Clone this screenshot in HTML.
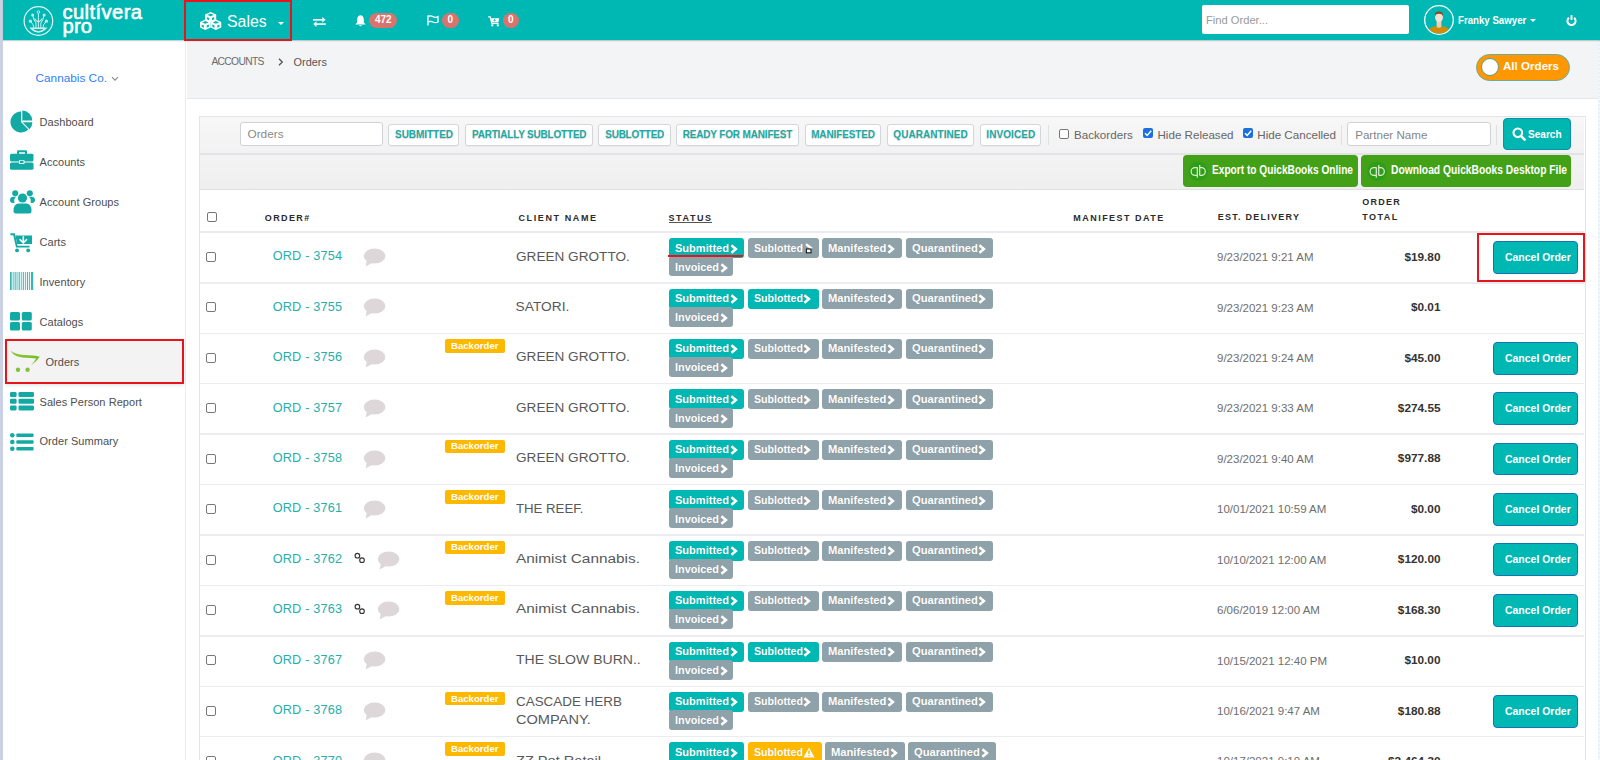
<!DOCTYPE html>
<html><head><meta charset="utf-8"><title>Orders</title>
<style>
html,body{margin:0;padding:0;width:1600px;height:760px;overflow:hidden;background:#fff;font-family:"Liberation Sans",sans-serif}
</style></head><body>
<div style="position:absolute;left:186px;top:40px;width:1412px;height:720px;background:#fff"></div>
<div style="position:absolute;left:187px;top:40px;width:1411px;height:58px;background:#f3f4f6;border-bottom:1px solid #e3e6ea"></div>
<div style="position:absolute;left:1597.8px;top:40px;width:2.2px;height:720px;background:repeating-linear-gradient(180deg,#e8f0f8 0 2px,#f3f8fc 2px 4px)"></div>
<div style="position:absolute;left:211.4px;top:57.38px;white-space:nowrap;font:normal 10.3px/10.3px 'Liberation Sans',sans-serif;color:#6b6b6b;letter-spacing:-0.68px;">ACCOUNTS</div>
<svg style="position:absolute;left:278px;top:58px" width="6" height="8" viewBox="0 0 6 8"><path d="M1 0.8 L4.3 4 L1 7.2" fill="none" stroke="#555" stroke-width="1.3"/></svg>
<div style="position:absolute;left:293.6px;top:56.87px;white-space:nowrap;font:normal 10.9px/10.9px 'Liberation Sans',sans-serif;color:#555;letter-spacing:0px;">Orders</div>
<div style="position:absolute;left:1476px;top:53.5px;width:94px;height:27.5px;box-sizing:border-box;border-radius:14px;background:#ff9800;border:1px solid #6aab9f"></div>
<div style="position:absolute;left:1481px;top:58px;width:18px;height:18px;box-sizing:border-box;border-radius:50%;background:#fff;border:1px solid #5d9c7a"></div>
<div style="position:absolute;left:1503px;top:60.18px;white-space:nowrap;font:bold 11.6px/11.6px 'Liberation Sans',sans-serif;color:#fff;letter-spacing:0px;">All Orders</div>
<div style="position:absolute;left:199px;top:115.5px;width:1387px;height:650px;box-sizing:border-box;border:1px solid #e2e4e7;border-bottom:none;background:#fff"></div>
<div style="position:absolute;left:200px;top:116.5px;width:1384px;height:36px;background:linear-gradient(#f7f7f7,#f2f2f2);border-bottom:2px solid #e1e3e6"></div>
<div style="position:absolute;left:200px;top:154.5px;width:1384px;height:34.5px;background:linear-gradient(#f3f3f3,#efefef);border-bottom:1px solid #dfe1e4"></div>
<div style="position:absolute;left:239.5px;top:122.3px;width:143.5px;height:24px;box-sizing:border-box;background:#fff;border:1px solid #cfd2d6;border-radius:3px"></div>
<div style="position:absolute;left:247.5px;top:128.51px;white-space:nowrap;font:normal 11.8px/11.8px 'Liberation Sans',sans-serif;color:#8a8a8a;letter-spacing:0px;">Orders</div>
<div style="position:absolute;left:388.4px;top:123.5px;width:70.9px;height:22px;box-sizing:border-box;background:#fff;border:1px solid #d3d6da;border-radius:3px;box-shadow:0 1px 1px rgba(0,0,0,0.04)"></div>
<div style="position:absolute;left:395px;top:130.03px;white-space:nowrap;font:bold 10px/10px 'Liberation Sans',sans-serif;color:#1fa9a3;letter-spacing:-0.041px;text-shadow:0 1px 1px rgba(0,0,0,0.18)">SUBMITTED</div>
<div style="position:absolute;left:465.1px;top:123.5px;width:128.3px;height:22px;box-sizing:border-box;background:#fff;border:1px solid #d3d6da;border-radius:3px;box-shadow:0 1px 1px rgba(0,0,0,0.04)"></div>
<div style="position:absolute;left:471.9px;top:130.03px;white-space:nowrap;font:bold 10px/10px 'Liberation Sans',sans-serif;color:#1fa9a3;letter-spacing:-0.192px;text-shadow:0 1px 1px rgba(0,0,0,0.18)">PARTIALLY SUBLOTTED</div>
<div style="position:absolute;left:598.3px;top:123.5px;width:72.7px;height:22px;box-sizing:border-box;background:#fff;border:1px solid #d3d6da;border-radius:3px;box-shadow:0 1px 1px rgba(0,0,0,0.04)"></div>
<div style="position:absolute;left:605.3px;top:130.03px;white-space:nowrap;font:bold 10px/10px 'Liberation Sans',sans-serif;color:#1fa9a3;letter-spacing:-0.264px;text-shadow:0 1px 1px rgba(0,0,0,0.18)">SUBLOTTED</div>
<div style="position:absolute;left:675.5px;top:123.5px;width:123.1px;height:22px;box-sizing:border-box;background:#fff;border:1px solid #d3d6da;border-radius:3px;box-shadow:0 1px 1px rgba(0,0,0,0.04)"></div>
<div style="position:absolute;left:682.7px;top:130.03px;white-space:nowrap;font:bold 10px/10px 'Liberation Sans',sans-serif;color:#1fa9a3;letter-spacing:-0.165px;text-shadow:0 1px 1px rgba(0,0,0,0.18)">READY FOR MANIFEST</div>
<div style="position:absolute;left:804.5px;top:123.5px;width:76.0px;height:22px;box-sizing:border-box;background:#fff;border:1px solid #d3d6da;border-radius:3px;box-shadow:0 1px 1px rgba(0,0,0,0.04)"></div>
<div style="position:absolute;left:811.2px;top:130.03px;white-space:nowrap;font:bold 10px/10px 'Liberation Sans',sans-serif;color:#1fa9a3;letter-spacing:-0.144px;text-shadow:0 1px 1px rgba(0,0,0,0.18)">MANIFESTED</div>
<div style="position:absolute;left:886.6px;top:123.5px;width:87.7px;height:22px;box-sizing:border-box;background:#fff;border:1px solid #d3d6da;border-radius:3px;box-shadow:0 1px 1px rgba(0,0,0,0.04)"></div>
<div style="position:absolute;left:893.3px;top:130.03px;white-space:nowrap;font:bold 10px/10px 'Liberation Sans',sans-serif;color:#1fa9a3;letter-spacing:0.061px;text-shadow:0 1px 1px rgba(0,0,0,0.18)">QUARANTINED</div>
<div style="position:absolute;left:979.5px;top:123.5px;width:61.9px;height:22px;box-sizing:border-box;background:#fff;border:1px solid #d3d6da;border-radius:3px;box-shadow:0 1px 1px rgba(0,0,0,0.04)"></div>
<div style="position:absolute;left:986.3px;top:130.03px;white-space:nowrap;font:bold 10px/10px 'Liberation Sans',sans-serif;color:#1fa9a3;letter-spacing:0.094px;text-shadow:0 1px 1px rgba(0,0,0,0.18)">INVOICED</div>
<div style="position:absolute;left:1047.5px;top:125px;width:1px;height:20px;background:#dde0e4"></div>
<div style="position:absolute;left:1341px;top:125px;width:1px;height:20px;background:#dde0e4"></div>
<div style="position:absolute;left:1496.4px;top:125px;width:1px;height:20px;background:#dde0e4"></div>
<div style="position:absolute;left:1058.7px;top:128.5px;width:10px;height:10px;box-sizing:border-box;border:1px solid #777;border-radius:2px;background:#fff"></div>
<div style="position:absolute;left:1074px;top:128.78px;white-space:nowrap;font:normal 11.6px/11.6px 'Liberation Sans',sans-serif;color:#666;letter-spacing:0.02px;">Backorders</div>
<div style="position:absolute;left:1143px;top:128.3px;width:10px;height:10px;border-radius:2px;background:#1b6fe0"></div>
<svg style="position:absolute;left:1143px;top:128.3px" width="10" height="10" viewBox="0 0 10 10"><path d="M2 5.2 L4.2 7.4 L8.2 2.8" fill="none" stroke="#fff" stroke-width="1.5"/></svg>
<div style="position:absolute;left:1242.7px;top:128.3px;width:10px;height:10px;border-radius:2px;background:#1b6fe0"></div>
<svg style="position:absolute;left:1242.7px;top:128.3px" width="10" height="10" viewBox="0 0 10 10"><path d="M2 5.2 L4.2 7.4 L8.2 2.8" fill="none" stroke="#fff" stroke-width="1.5"/></svg>
<div style="position:absolute;left:1157.5px;top:128.78px;white-space:nowrap;font:normal 11.6px/11.6px 'Liberation Sans',sans-serif;color:#666;letter-spacing:0px;">Hide Released</div>
<div style="position:absolute;left:1257.3px;top:128.78px;white-space:nowrap;font:normal 11.6px/11.6px 'Liberation Sans',sans-serif;color:#666;letter-spacing:0px;">Hide Cancelled</div>
<div style="position:absolute;left:1347.3px;top:122.4px;width:143.4px;height:24px;box-sizing:border-box;background:#fff;border:1px solid #cfd2d6;border-radius:3px"></div>
<div style="position:absolute;left:1355.2px;top:128.78px;white-space:nowrap;font:normal 11.6px/11.6px 'Liberation Sans',sans-serif;color:#858585;letter-spacing:0px;">Partner Name</div>
<div style="position:absolute;left:1502.8px;top:118.2px;width:68px;height:32.3px;box-sizing:border-box;background:#00b6b1;border:1px solid #0e8fb0;border-radius:4px"></div>
<svg style="position:absolute;left:1511.5px;top:127px" width="14" height="14" viewBox="0 0 14 14"><circle cx="5.8" cy="5.8" r="4.3" fill="none" stroke="#fff" stroke-width="2.1"/><path d="M8.9 8.9 L12.6 12.6" stroke="#fff" stroke-width="2.6" stroke-linecap="round"/></svg>
<div style="position:absolute;left:1528.1px;top:129.02px;white-space:nowrap;font:bold 11.2px/11.2px 'Liberation Sans',sans-serif;color:#fff;letter-spacing:0px;"><span style="display:inline-block;transform:scaleX(0.9);transform-origin:0 0">Search</span></div>
<div style="position:absolute;left:1182.6px;top:155.4px;width:175.0px;height:31.4px;border-radius:4px;background:#43a117"></div>
<svg style="position:absolute;left:1188.1999999999998px;top:161px" width="21" height="21" viewBox="0 0 21 21"><circle cx="10.2" cy="10.2" r="9.8" fill="#2f9d1a"/><path d="M9.3 6.6 H7 A3.9 3.9 0 0 0 7 14.4 H9.3 M9.3 6.3 V16.7" fill="none" stroke="#d9efcf" stroke-width="1.2"/><path d="M11.7 4 V14.5 M11.7 14.4 H13.4 A3.9 3.9 0 0 0 13.4 6.6 H11.7" fill="none" stroke="#d9efcf" stroke-width="1.2"/></svg>
<div style="position:absolute;left:1211.6999999999998px;top:163.53px;white-space:nowrap;font:bold 12.6px/12.6px 'Liberation Sans',sans-serif;color:#fff;letter-spacing:0px;"><span style="display:inline-block;transform:scaleX(0.8060);transform-origin:0 0">Export to QuickBooks Online</span></div>
<div style="position:absolute;left:1361.4px;top:155.4px;width:209.6px;height:31.4px;border-radius:4px;background:#43a117"></div>
<svg style="position:absolute;left:1367.0px;top:161px" width="21" height="21" viewBox="0 0 21 21"><circle cx="10.2" cy="10.2" r="9.8" fill="#2f9d1a"/><path d="M9.3 6.6 H7 A3.9 3.9 0 0 0 7 14.4 H9.3 M9.3 6.3 V16.7" fill="none" stroke="#d9efcf" stroke-width="1.2"/><path d="M11.7 4 V14.5 M11.7 14.4 H13.4 A3.9 3.9 0 0 0 13.4 6.6 H11.7" fill="none" stroke="#d9efcf" stroke-width="1.2"/></svg>
<div style="position:absolute;left:1390.5px;top:163.53px;white-space:nowrap;font:bold 12.6px/12.6px 'Liberation Sans',sans-serif;color:#fff;letter-spacing:0px;"><span style="display:inline-block;transform:scaleX(0.8166);transform-origin:0 0">Download QuickBooks Desktop File</span></div>
<div style="position:absolute;left:207px;top:211.6px;width:10px;height:10px;box-sizing:border-box;border:1px solid #777;border-radius:2px;background:#fff"></div>
<div style="position:absolute;left:264.75px;top:213.58px;white-space:nowrap;font:bold 9px/9px 'Liberation Sans',sans-serif;color:#2b2b2b;letter-spacing:1.399px;">ORDER#</div>
<div style="position:absolute;left:518.5px;top:213.58px;white-space:nowrap;font:bold 9px/9px 'Liberation Sans',sans-serif;color:#2b2b2b;letter-spacing:1.6px;">CLIENT NAME</div>
<div style="position:absolute;left:668.5px;top:213.58px;white-space:nowrap;font:bold 9px/9px 'Liberation Sans',sans-serif;color:#2b2b2b;letter-spacing:1.587px;">STATUS</div>
<div style="position:absolute;left:668.5px;top:222.3px;width:43px;height:1px;background:#555"></div>
<div style="position:absolute;left:1073.25px;top:213.58px;white-space:nowrap;font:bold 9px/9px 'Liberation Sans',sans-serif;color:#2b2b2b;letter-spacing:1.473px;">MANIFEST DATE</div>
<div style="position:absolute;left:1217.8px;top:213.38px;white-space:nowrap;font:bold 9px/9px 'Liberation Sans',sans-serif;color:#2b2b2b;letter-spacing:1.252px;">EST. DELIVERY</div>
<div style="position:absolute;left:1362.2px;top:198.48px;white-space:nowrap;font:bold 9px/9px 'Liberation Sans',sans-serif;color:#2b2b2b;letter-spacing:1.275px;">ORDER</div>
<div style="position:absolute;left:1362.2px;top:213.38px;white-space:nowrap;font:bold 9px/9px 'Liberation Sans',sans-serif;color:#2b2b2b;letter-spacing:1.459px;">TOTAL</div>
<div style="position:absolute;left:200px;top:231px;width:1384px;height:1.6px;background:#e8ebef"></div>
<div style="position:absolute;left:200px;top:282.20px;width:1384px;height:1.4px;background:#eaecf0"></div>
<div style="position:absolute;left:206px;top:252.00px;width:10px;height:10px;box-sizing:border-box;border:1px solid #777;border-radius:2px;background:#fff"></div>
<div style="position:absolute;left:272.7px;top:250.35px;white-space:nowrap;font:normal 12.7px/12.7px 'Liberation Sans',sans-serif;color:#25aeaa;letter-spacing:0.2px;">ORD - 3754</div>
<svg style="position:absolute;left:362.9px;top:248.00px" width="23" height="20" viewBox="0 0 23 20"><ellipse cx="11.6" cy="8" rx="10.8" ry="7.6" fill="#ddd7d9"/><path d="M4 12 L2.6 18.6 L10 14.5 Z" fill="#ddd7d9"/></svg>
<div style="position:absolute;left:515.6px;top:249.50px;white-space:nowrap;font:normal 13.7px/13.7px 'Liberation Sans',sans-serif;color:#585858;letter-spacing:0px;"><span style="display:inline-block;transform:scaleX(0.9932);transform-origin:0 0">GREEN GROTTO.</span></div>
<div style="position:absolute;left:669px;top:238.20px;width:75.2px;height:20px;border-radius:3px;background:#00b8b3"></div>
<div style="position:absolute;left:675px;top:242.53px;white-space:nowrap;font:bold 10.6px/10.6px 'Liberation Sans',sans-serif;color:#fff;letter-spacing:0px;text-shadow:0 0 1px rgba(0,0,0,0.15)"><span style="display:inline-block;transform:scaleX(1.0427);transform-origin:0 0">Submitted</span></div>
<svg style="position:absolute;left:729.6px;top:243.5px" width="9" height="11" viewBox="0 0 9 11"><path d="M1.4 1.3 L5.9 5 L1.4 8.7" fill="none" stroke="#fff" stroke-width="2.5"/></svg>
<div style="position:absolute;left:747.5px;top:238.20px;width:71.5px;height:20px;border-radius:3px;background:#8fa1a9"></div>
<div style="position:absolute;left:753.5px;top:242.53px;white-space:nowrap;font:bold 10.6px/10.6px 'Liberation Sans',sans-serif;color:#fff;letter-spacing:0px;text-shadow:0 0 1px rgba(0,0,0,0.15)"><span style="display:inline-block;transform:scaleX(1.0032);transform-origin:0 0">Sublotted</span></div>
<div style="position:absolute;left:822.2px;top:238.20px;width:79.7px;height:20px;border-radius:3px;background:#8fa1a9"></div>
<div style="position:absolute;left:828.2px;top:242.53px;white-space:nowrap;font:bold 10.6px/10.6px 'Liberation Sans',sans-serif;color:#fff;letter-spacing:0px;text-shadow:0 0 1px rgba(0,0,0,0.15)"><span style="display:inline-block;transform:scaleX(1.0554);transform-origin:0 0">Manifested</span></div>
<svg style="position:absolute;left:887.2px;top:243.5px" width="9" height="11" viewBox="0 0 9 11"><path d="M1.4 1.3 L5.9 5 L1.4 8.7" fill="none" stroke="#fff" stroke-width="2.5"/></svg>
<div style="position:absolute;left:905.5px;top:238.20px;width:87.2px;height:20px;border-radius:3px;background:#8fa1a9"></div>
<div style="position:absolute;left:911.5px;top:242.53px;white-space:nowrap;font:bold 10.6px/10.6px 'Liberation Sans',sans-serif;color:#fff;letter-spacing:0px;text-shadow:0 0 1px rgba(0,0,0,0.15)"><span style="display:inline-block;transform:scaleX(1.0562);transform-origin:0 0">Quarantined</span></div>
<svg style="position:absolute;left:978.0px;top:243.5px" width="9" height="11" viewBox="0 0 9 11"><path d="M1.4 1.3 L5.9 5 L1.4 8.7" fill="none" stroke="#fff" stroke-width="2.5"/></svg>
<div style="position:absolute;left:669px;top:256.30px;width:64.0px;height:20px;border-radius:3px;background:#8fa1a9"></div>
<div style="position:absolute;left:675px;top:261.53px;white-space:nowrap;font:bold 10.6px/10.6px 'Liberation Sans',sans-serif;color:#fff;letter-spacing:0px;text-shadow:0 0 1px rgba(0,0,0,0.15)"><span style="display:inline-block;transform:scaleX(1.0238);transform-origin:0 0">Invoiced</span></div>
<svg style="position:absolute;left:719.6px;top:262.5px" width="9" height="11" viewBox="0 0 9 11"><path d="M1.4 1.3 L5.9 5 L1.4 8.7" fill="none" stroke="#fff" stroke-width="2.5"/></svg>
<div style="position:absolute;left:1217px;top:252.17px;white-space:nowrap;font:normal 11.5px/11.5px 'Liberation Sans',sans-serif;color:#6e6e6e;letter-spacing:0px;">9/23/2021 9:21 AM</div>
<div style="position:absolute;left:1404.42px;top:251.81px;font:bold 11.8px/11.8px 'Liberation Sans',sans-serif;color:#333;white-space:nowrap">$19.80</div>
<div style="position:absolute;left:1493.1px;top:240.90px;width:84.7px;height:32.9px;box-sizing:border-box;border-radius:4px;background:#00b8b3;border:1px solid #1673b5"></div>
<div style="position:absolute;left:1504.7px;top:251.83px;white-space:nowrap;font:bold 11.3px/11.3px 'Liberation Sans',sans-serif;color:#fff;letter-spacing:0px;"><span style="display:inline-block;transform:scaleX(0.9260);transform-origin:0 0">Cancel Order</span></div>
<div style="position:absolute;left:200px;top:332.62px;width:1384px;height:1.4px;background:#eaecf0"></div>
<div style="position:absolute;left:206px;top:302.42px;width:10px;height:10px;box-sizing:border-box;border:1px solid #777;border-radius:2px;background:#fff"></div>
<div style="position:absolute;left:272.7px;top:300.77px;white-space:nowrap;font:normal 12.7px/12.7px 'Liberation Sans',sans-serif;color:#25aeaa;letter-spacing:0.2px;">ORD - 3755</div>
<svg style="position:absolute;left:362.9px;top:298.42px" width="23" height="20" viewBox="0 0 23 20"><ellipse cx="11.6" cy="8" rx="10.8" ry="7.6" fill="#ddd7d9"/><path d="M4 12 L2.6 18.6 L10 14.5 Z" fill="#ddd7d9"/></svg>
<div style="position:absolute;left:515.6px;top:299.92px;white-space:nowrap;font:normal 13.7px/13.7px 'Liberation Sans',sans-serif;color:#585858;letter-spacing:0.05px;">SATORI.</div>
<div style="position:absolute;left:669px;top:288.62px;width:75.2px;height:20px;border-radius:3px;background:#00b8b3"></div>
<div style="position:absolute;left:675px;top:292.95px;white-space:nowrap;font:bold 10.6px/10.6px 'Liberation Sans',sans-serif;color:#fff;letter-spacing:0px;text-shadow:0 0 1px rgba(0,0,0,0.15)"><span style="display:inline-block;transform:scaleX(1.0427);transform-origin:0 0">Submitted</span></div>
<svg style="position:absolute;left:729.6px;top:293.92px" width="9" height="11" viewBox="0 0 9 11"><path d="M1.4 1.3 L5.9 5 L1.4 8.7" fill="none" stroke="#fff" stroke-width="2.5"/></svg>
<div style="position:absolute;left:747.5px;top:288.62px;width:71.5px;height:20px;border-radius:3px;background:#00b8b3"></div>
<div style="position:absolute;left:753.5px;top:292.95px;white-space:nowrap;font:bold 10.6px/10.6px 'Liberation Sans',sans-serif;color:#fff;letter-spacing:0px;text-shadow:0 0 1px rgba(0,0,0,0.15)"><span style="display:inline-block;transform:scaleX(1.0032);transform-origin:0 0">Sublotted</span></div>
<svg style="position:absolute;left:803.1px;top:293.92px" width="9" height="11" viewBox="0 0 9 11"><path d="M1.4 1.3 L5.9 5 L1.4 8.7" fill="none" stroke="#fff" stroke-width="2.5"/></svg>
<div style="position:absolute;left:822.2px;top:288.62px;width:79.7px;height:20px;border-radius:3px;background:#8fa1a9"></div>
<div style="position:absolute;left:828.2px;top:292.95px;white-space:nowrap;font:bold 10.6px/10.6px 'Liberation Sans',sans-serif;color:#fff;letter-spacing:0px;text-shadow:0 0 1px rgba(0,0,0,0.15)"><span style="display:inline-block;transform:scaleX(1.0554);transform-origin:0 0">Manifested</span></div>
<svg style="position:absolute;left:887.2px;top:293.92px" width="9" height="11" viewBox="0 0 9 11"><path d="M1.4 1.3 L5.9 5 L1.4 8.7" fill="none" stroke="#fff" stroke-width="2.5"/></svg>
<div style="position:absolute;left:905.5px;top:288.62px;width:87.2px;height:20px;border-radius:3px;background:#8fa1a9"></div>
<div style="position:absolute;left:911.5px;top:292.95px;white-space:nowrap;font:bold 10.6px/10.6px 'Liberation Sans',sans-serif;color:#fff;letter-spacing:0px;text-shadow:0 0 1px rgba(0,0,0,0.15)"><span style="display:inline-block;transform:scaleX(1.0562);transform-origin:0 0">Quarantined</span></div>
<svg style="position:absolute;left:978.0px;top:293.92px" width="9" height="11" viewBox="0 0 9 11"><path d="M1.4 1.3 L5.9 5 L1.4 8.7" fill="none" stroke="#fff" stroke-width="2.5"/></svg>
<div style="position:absolute;left:669px;top:306.72px;width:64.0px;height:20px;border-radius:3px;background:#8fa1a9"></div>
<div style="position:absolute;left:675px;top:311.95px;white-space:nowrap;font:bold 10.6px/10.6px 'Liberation Sans',sans-serif;color:#fff;letter-spacing:0px;text-shadow:0 0 1px rgba(0,0,0,0.15)"><span style="display:inline-block;transform:scaleX(1.0238);transform-origin:0 0">Invoiced</span></div>
<svg style="position:absolute;left:719.6px;top:312.92px" width="9" height="11" viewBox="0 0 9 11"><path d="M1.4 1.3 L5.9 5 L1.4 8.7" fill="none" stroke="#fff" stroke-width="2.5"/></svg>
<div style="position:absolute;left:1217px;top:302.59px;white-space:nowrap;font:normal 11.5px/11.5px 'Liberation Sans',sans-serif;color:#6e6e6e;letter-spacing:0px;">9/23/2021 9:23 AM</div>
<div style="position:absolute;left:1410.98px;top:302.23px;font:bold 11.8px/11.8px 'Liberation Sans',sans-serif;color:#333;white-space:nowrap">$0.01</div>
<div style="position:absolute;left:200px;top:383.04px;width:1384px;height:1.4px;background:#eaecf0"></div>
<div style="position:absolute;left:206px;top:352.84px;width:10px;height:10px;box-sizing:border-box;border:1px solid #777;border-radius:2px;background:#fff"></div>
<div style="position:absolute;left:272.7px;top:351.19px;white-space:nowrap;font:normal 12.7px/12.7px 'Liberation Sans',sans-serif;color:#25aeaa;letter-spacing:0.2px;">ORD - 3756</div>
<svg style="position:absolute;left:362.9px;top:348.84px" width="23" height="20" viewBox="0 0 23 20"><ellipse cx="11.6" cy="8" rx="10.8" ry="7.6" fill="#ddd7d9"/><path d="M4 12 L2.6 18.6 L10 14.5 Z" fill="#ddd7d9"/></svg>
<div style="position:absolute;left:445.25px;top:339.00px;width:59.75px;height:13.5px;border-radius:2px;background:#ffb800"></div>
<div style="position:absolute;left:451px;top:340.62px;white-space:nowrap;font:bold 9.6px/9.6px 'Liberation Sans',sans-serif;color:#fff;letter-spacing:0px;"><span style="display:inline-block;transform:scaleX(1.0009);transform-origin:0 0">Backorder</span></div>
<div style="position:absolute;left:515.6px;top:350.34px;white-space:nowrap;font:normal 13.7px/13.7px 'Liberation Sans',sans-serif;color:#585858;letter-spacing:0px;"><span style="display:inline-block;transform:scaleX(0.9932);transform-origin:0 0">GREEN GROTTO.</span></div>
<div style="position:absolute;left:669px;top:339.04px;width:75.2px;height:20px;border-radius:3px;background:#00b8b3"></div>
<div style="position:absolute;left:675px;top:343.37px;white-space:nowrap;font:bold 10.6px/10.6px 'Liberation Sans',sans-serif;color:#fff;letter-spacing:0px;text-shadow:0 0 1px rgba(0,0,0,0.15)"><span style="display:inline-block;transform:scaleX(1.0427);transform-origin:0 0">Submitted</span></div>
<svg style="position:absolute;left:729.6px;top:344.34000000000003px" width="9" height="11" viewBox="0 0 9 11"><path d="M1.4 1.3 L5.9 5 L1.4 8.7" fill="none" stroke="#fff" stroke-width="2.5"/></svg>
<div style="position:absolute;left:747.5px;top:339.04px;width:71.5px;height:20px;border-radius:3px;background:#8fa1a9"></div>
<div style="position:absolute;left:753.5px;top:343.37px;white-space:nowrap;font:bold 10.6px/10.6px 'Liberation Sans',sans-serif;color:#fff;letter-spacing:0px;text-shadow:0 0 1px rgba(0,0,0,0.15)"><span style="display:inline-block;transform:scaleX(1.0032);transform-origin:0 0">Sublotted</span></div>
<svg style="position:absolute;left:803.1px;top:344.34000000000003px" width="9" height="11" viewBox="0 0 9 11"><path d="M1.4 1.3 L5.9 5 L1.4 8.7" fill="none" stroke="#fff" stroke-width="2.5"/></svg>
<div style="position:absolute;left:822.2px;top:339.04px;width:79.7px;height:20px;border-radius:3px;background:#8fa1a9"></div>
<div style="position:absolute;left:828.2px;top:343.37px;white-space:nowrap;font:bold 10.6px/10.6px 'Liberation Sans',sans-serif;color:#fff;letter-spacing:0px;text-shadow:0 0 1px rgba(0,0,0,0.15)"><span style="display:inline-block;transform:scaleX(1.0554);transform-origin:0 0">Manifested</span></div>
<svg style="position:absolute;left:887.2px;top:344.34000000000003px" width="9" height="11" viewBox="0 0 9 11"><path d="M1.4 1.3 L5.9 5 L1.4 8.7" fill="none" stroke="#fff" stroke-width="2.5"/></svg>
<div style="position:absolute;left:905.5px;top:339.04px;width:87.2px;height:20px;border-radius:3px;background:#8fa1a9"></div>
<div style="position:absolute;left:911.5px;top:343.37px;white-space:nowrap;font:bold 10.6px/10.6px 'Liberation Sans',sans-serif;color:#fff;letter-spacing:0px;text-shadow:0 0 1px rgba(0,0,0,0.15)"><span style="display:inline-block;transform:scaleX(1.0562);transform-origin:0 0">Quarantined</span></div>
<svg style="position:absolute;left:978.0px;top:344.34000000000003px" width="9" height="11" viewBox="0 0 9 11"><path d="M1.4 1.3 L5.9 5 L1.4 8.7" fill="none" stroke="#fff" stroke-width="2.5"/></svg>
<div style="position:absolute;left:669px;top:357.14px;width:64.0px;height:20px;border-radius:3px;background:#8fa1a9"></div>
<div style="position:absolute;left:675px;top:362.37px;white-space:nowrap;font:bold 10.6px/10.6px 'Liberation Sans',sans-serif;color:#fff;letter-spacing:0px;text-shadow:0 0 1px rgba(0,0,0,0.15)"><span style="display:inline-block;transform:scaleX(1.0238);transform-origin:0 0">Invoiced</span></div>
<svg style="position:absolute;left:719.6px;top:363.34000000000003px" width="9" height="11" viewBox="0 0 9 11"><path d="M1.4 1.3 L5.9 5 L1.4 8.7" fill="none" stroke="#fff" stroke-width="2.5"/></svg>
<div style="position:absolute;left:1217px;top:353.01px;white-space:nowrap;font:normal 11.5px/11.5px 'Liberation Sans',sans-serif;color:#6e6e6e;letter-spacing:0px;">9/23/2021 9:24 AM</div>
<div style="position:absolute;left:1404.42px;top:352.65px;font:bold 11.8px/11.8px 'Liberation Sans',sans-serif;color:#333;white-space:nowrap">$45.00</div>
<div style="position:absolute;left:1493.1px;top:341.74px;width:84.7px;height:32.9px;box-sizing:border-box;border-radius:4px;background:#00b8b3;border:1px solid #1673b5"></div>
<div style="position:absolute;left:1504.7px;top:352.67px;white-space:nowrap;font:bold 11.3px/11.3px 'Liberation Sans',sans-serif;color:#fff;letter-spacing:0px;"><span style="display:inline-block;transform:scaleX(0.9260);transform-origin:0 0">Cancel Order</span></div>
<div style="position:absolute;left:200px;top:433.46px;width:1384px;height:1.4px;background:#eaecf0"></div>
<div style="position:absolute;left:206px;top:403.26px;width:10px;height:10px;box-sizing:border-box;border:1px solid #777;border-radius:2px;background:#fff"></div>
<div style="position:absolute;left:272.7px;top:401.61px;white-space:nowrap;font:normal 12.7px/12.7px 'Liberation Sans',sans-serif;color:#25aeaa;letter-spacing:0.2px;">ORD - 3757</div>
<svg style="position:absolute;left:362.9px;top:399.26px" width="23" height="20" viewBox="0 0 23 20"><ellipse cx="11.6" cy="8" rx="10.8" ry="7.6" fill="#ddd7d9"/><path d="M4 12 L2.6 18.6 L10 14.5 Z" fill="#ddd7d9"/></svg>
<div style="position:absolute;left:515.6px;top:400.76px;white-space:nowrap;font:normal 13.7px/13.7px 'Liberation Sans',sans-serif;color:#585858;letter-spacing:0px;"><span style="display:inline-block;transform:scaleX(0.9932);transform-origin:0 0">GREEN GROTTO.</span></div>
<div style="position:absolute;left:669px;top:389.46px;width:75.2px;height:20px;border-radius:3px;background:#00b8b3"></div>
<div style="position:absolute;left:675px;top:393.79px;white-space:nowrap;font:bold 10.6px/10.6px 'Liberation Sans',sans-serif;color:#fff;letter-spacing:0px;text-shadow:0 0 1px rgba(0,0,0,0.15)"><span style="display:inline-block;transform:scaleX(1.0427);transform-origin:0 0">Submitted</span></div>
<svg style="position:absolute;left:729.6px;top:394.76px" width="9" height="11" viewBox="0 0 9 11"><path d="M1.4 1.3 L5.9 5 L1.4 8.7" fill="none" stroke="#fff" stroke-width="2.5"/></svg>
<div style="position:absolute;left:747.5px;top:389.46px;width:71.5px;height:20px;border-radius:3px;background:#8fa1a9"></div>
<div style="position:absolute;left:753.5px;top:393.79px;white-space:nowrap;font:bold 10.6px/10.6px 'Liberation Sans',sans-serif;color:#fff;letter-spacing:0px;text-shadow:0 0 1px rgba(0,0,0,0.15)"><span style="display:inline-block;transform:scaleX(1.0032);transform-origin:0 0">Sublotted</span></div>
<svg style="position:absolute;left:803.1px;top:394.76px" width="9" height="11" viewBox="0 0 9 11"><path d="M1.4 1.3 L5.9 5 L1.4 8.7" fill="none" stroke="#fff" stroke-width="2.5"/></svg>
<div style="position:absolute;left:822.2px;top:389.46px;width:79.7px;height:20px;border-radius:3px;background:#8fa1a9"></div>
<div style="position:absolute;left:828.2px;top:393.79px;white-space:nowrap;font:bold 10.6px/10.6px 'Liberation Sans',sans-serif;color:#fff;letter-spacing:0px;text-shadow:0 0 1px rgba(0,0,0,0.15)"><span style="display:inline-block;transform:scaleX(1.0554);transform-origin:0 0">Manifested</span></div>
<svg style="position:absolute;left:887.2px;top:394.76px" width="9" height="11" viewBox="0 0 9 11"><path d="M1.4 1.3 L5.9 5 L1.4 8.7" fill="none" stroke="#fff" stroke-width="2.5"/></svg>
<div style="position:absolute;left:905.5px;top:389.46px;width:87.2px;height:20px;border-radius:3px;background:#8fa1a9"></div>
<div style="position:absolute;left:911.5px;top:393.79px;white-space:nowrap;font:bold 10.6px/10.6px 'Liberation Sans',sans-serif;color:#fff;letter-spacing:0px;text-shadow:0 0 1px rgba(0,0,0,0.15)"><span style="display:inline-block;transform:scaleX(1.0562);transform-origin:0 0">Quarantined</span></div>
<svg style="position:absolute;left:978.0px;top:394.76px" width="9" height="11" viewBox="0 0 9 11"><path d="M1.4 1.3 L5.9 5 L1.4 8.7" fill="none" stroke="#fff" stroke-width="2.5"/></svg>
<div style="position:absolute;left:669px;top:407.56px;width:64.0px;height:20px;border-radius:3px;background:#8fa1a9"></div>
<div style="position:absolute;left:675px;top:412.79px;white-space:nowrap;font:bold 10.6px/10.6px 'Liberation Sans',sans-serif;color:#fff;letter-spacing:0px;text-shadow:0 0 1px rgba(0,0,0,0.15)"><span style="display:inline-block;transform:scaleX(1.0238);transform-origin:0 0">Invoiced</span></div>
<svg style="position:absolute;left:719.6px;top:413.76px" width="9" height="11" viewBox="0 0 9 11"><path d="M1.4 1.3 L5.9 5 L1.4 8.7" fill="none" stroke="#fff" stroke-width="2.5"/></svg>
<div style="position:absolute;left:1217px;top:403.43px;white-space:nowrap;font:normal 11.5px/11.5px 'Liberation Sans',sans-serif;color:#6e6e6e;letter-spacing:0px;">9/23/2021 9:33 AM</div>
<div style="position:absolute;left:1397.86px;top:403.07px;font:bold 11.8px/11.8px 'Liberation Sans',sans-serif;color:#333;white-space:nowrap">$274.55</div>
<div style="position:absolute;left:1493.1px;top:392.16px;width:84.7px;height:32.9px;box-sizing:border-box;border-radius:4px;background:#00b8b3;border:1px solid #1673b5"></div>
<div style="position:absolute;left:1504.7px;top:403.09px;white-space:nowrap;font:bold 11.3px/11.3px 'Liberation Sans',sans-serif;color:#fff;letter-spacing:0px;"><span style="display:inline-block;transform:scaleX(0.9260);transform-origin:0 0">Cancel Order</span></div>
<div style="position:absolute;left:200px;top:483.88px;width:1384px;height:1.4px;background:#eaecf0"></div>
<div style="position:absolute;left:206px;top:453.68px;width:10px;height:10px;box-sizing:border-box;border:1px solid #777;border-radius:2px;background:#fff"></div>
<div style="position:absolute;left:272.7px;top:452.03px;white-space:nowrap;font:normal 12.7px/12.7px 'Liberation Sans',sans-serif;color:#25aeaa;letter-spacing:0.2px;">ORD - 3758</div>
<svg style="position:absolute;left:362.9px;top:449.68px" width="23" height="20" viewBox="0 0 23 20"><ellipse cx="11.6" cy="8" rx="10.8" ry="7.6" fill="#ddd7d9"/><path d="M4 12 L2.6 18.6 L10 14.5 Z" fill="#ddd7d9"/></svg>
<div style="position:absolute;left:445.25px;top:439.84px;width:59.75px;height:13.5px;border-radius:2px;background:#ffb800"></div>
<div style="position:absolute;left:451px;top:441.46px;white-space:nowrap;font:bold 9.6px/9.6px 'Liberation Sans',sans-serif;color:#fff;letter-spacing:0px;"><span style="display:inline-block;transform:scaleX(1.0009);transform-origin:0 0">Backorder</span></div>
<div style="position:absolute;left:515.6px;top:451.18px;white-space:nowrap;font:normal 13.7px/13.7px 'Liberation Sans',sans-serif;color:#585858;letter-spacing:0px;"><span style="display:inline-block;transform:scaleX(0.9932);transform-origin:0 0">GREEN GROTTO.</span></div>
<div style="position:absolute;left:669px;top:439.88px;width:75.2px;height:20px;border-radius:3px;background:#00b8b3"></div>
<div style="position:absolute;left:675px;top:444.21px;white-space:nowrap;font:bold 10.6px/10.6px 'Liberation Sans',sans-serif;color:#fff;letter-spacing:0px;text-shadow:0 0 1px rgba(0,0,0,0.15)"><span style="display:inline-block;transform:scaleX(1.0427);transform-origin:0 0">Submitted</span></div>
<svg style="position:absolute;left:729.6px;top:445.18px" width="9" height="11" viewBox="0 0 9 11"><path d="M1.4 1.3 L5.9 5 L1.4 8.7" fill="none" stroke="#fff" stroke-width="2.5"/></svg>
<div style="position:absolute;left:747.5px;top:439.88px;width:71.5px;height:20px;border-radius:3px;background:#8fa1a9"></div>
<div style="position:absolute;left:753.5px;top:444.21px;white-space:nowrap;font:bold 10.6px/10.6px 'Liberation Sans',sans-serif;color:#fff;letter-spacing:0px;text-shadow:0 0 1px rgba(0,0,0,0.15)"><span style="display:inline-block;transform:scaleX(1.0032);transform-origin:0 0">Sublotted</span></div>
<svg style="position:absolute;left:803.1px;top:445.18px" width="9" height="11" viewBox="0 0 9 11"><path d="M1.4 1.3 L5.9 5 L1.4 8.7" fill="none" stroke="#fff" stroke-width="2.5"/></svg>
<div style="position:absolute;left:822.2px;top:439.88px;width:79.7px;height:20px;border-radius:3px;background:#8fa1a9"></div>
<div style="position:absolute;left:828.2px;top:444.21px;white-space:nowrap;font:bold 10.6px/10.6px 'Liberation Sans',sans-serif;color:#fff;letter-spacing:0px;text-shadow:0 0 1px rgba(0,0,0,0.15)"><span style="display:inline-block;transform:scaleX(1.0554);transform-origin:0 0">Manifested</span></div>
<svg style="position:absolute;left:887.2px;top:445.18px" width="9" height="11" viewBox="0 0 9 11"><path d="M1.4 1.3 L5.9 5 L1.4 8.7" fill="none" stroke="#fff" stroke-width="2.5"/></svg>
<div style="position:absolute;left:905.5px;top:439.88px;width:87.2px;height:20px;border-radius:3px;background:#8fa1a9"></div>
<div style="position:absolute;left:911.5px;top:444.21px;white-space:nowrap;font:bold 10.6px/10.6px 'Liberation Sans',sans-serif;color:#fff;letter-spacing:0px;text-shadow:0 0 1px rgba(0,0,0,0.15)"><span style="display:inline-block;transform:scaleX(1.0562);transform-origin:0 0">Quarantined</span></div>
<svg style="position:absolute;left:978.0px;top:445.18px" width="9" height="11" viewBox="0 0 9 11"><path d="M1.4 1.3 L5.9 5 L1.4 8.7" fill="none" stroke="#fff" stroke-width="2.5"/></svg>
<div style="position:absolute;left:669px;top:457.98px;width:64.0px;height:20px;border-radius:3px;background:#8fa1a9"></div>
<div style="position:absolute;left:675px;top:463.21px;white-space:nowrap;font:bold 10.6px/10.6px 'Liberation Sans',sans-serif;color:#fff;letter-spacing:0px;text-shadow:0 0 1px rgba(0,0,0,0.15)"><span style="display:inline-block;transform:scaleX(1.0238);transform-origin:0 0">Invoiced</span></div>
<svg style="position:absolute;left:719.6px;top:464.18px" width="9" height="11" viewBox="0 0 9 11"><path d="M1.4 1.3 L5.9 5 L1.4 8.7" fill="none" stroke="#fff" stroke-width="2.5"/></svg>
<div style="position:absolute;left:1217px;top:453.85px;white-space:nowrap;font:normal 11.5px/11.5px 'Liberation Sans',sans-serif;color:#6e6e6e;letter-spacing:0px;">9/23/2021 9:40 AM</div>
<div style="position:absolute;left:1397.86px;top:453.49px;font:bold 11.8px/11.8px 'Liberation Sans',sans-serif;color:#333;white-space:nowrap">$977.88</div>
<div style="position:absolute;left:1493.1px;top:442.58px;width:84.7px;height:32.9px;box-sizing:border-box;border-radius:4px;background:#00b8b3;border:1px solid #1673b5"></div>
<div style="position:absolute;left:1504.7px;top:453.51px;white-space:nowrap;font:bold 11.3px/11.3px 'Liberation Sans',sans-serif;color:#fff;letter-spacing:0px;"><span style="display:inline-block;transform:scaleX(0.9260);transform-origin:0 0">Cancel Order</span></div>
<div style="position:absolute;left:200px;top:534.30px;width:1384px;height:1.4px;background:#eaecf0"></div>
<div style="position:absolute;left:206px;top:504.10px;width:10px;height:10px;box-sizing:border-box;border:1px solid #777;border-radius:2px;background:#fff"></div>
<div style="position:absolute;left:272.7px;top:502.45px;white-space:nowrap;font:normal 12.7px/12.7px 'Liberation Sans',sans-serif;color:#25aeaa;letter-spacing:0.2px;">ORD - 3761</div>
<svg style="position:absolute;left:362.9px;top:500.10px" width="23" height="20" viewBox="0 0 23 20"><ellipse cx="11.6" cy="8" rx="10.8" ry="7.6" fill="#ddd7d9"/><path d="M4 12 L2.6 18.6 L10 14.5 Z" fill="#ddd7d9"/></svg>
<div style="position:absolute;left:445.25px;top:490.26px;width:59.75px;height:13.5px;border-radius:2px;background:#ffb800"></div>
<div style="position:absolute;left:451px;top:491.88px;white-space:nowrap;font:bold 9.6px/9.6px 'Liberation Sans',sans-serif;color:#fff;letter-spacing:0px;"><span style="display:inline-block;transform:scaleX(1.0009);transform-origin:0 0">Backorder</span></div>
<div style="position:absolute;left:515.6px;top:501.60px;white-space:nowrap;font:normal 13.7px/13.7px 'Liberation Sans',sans-serif;color:#585858;letter-spacing:0px;"><span style="display:inline-block;transform:scaleX(0.9647);transform-origin:0 0">THE REEF.</span></div>
<div style="position:absolute;left:669px;top:490.30px;width:75.2px;height:20px;border-radius:3px;background:#00b8b3"></div>
<div style="position:absolute;left:675px;top:494.63px;white-space:nowrap;font:bold 10.6px/10.6px 'Liberation Sans',sans-serif;color:#fff;letter-spacing:0px;text-shadow:0 0 1px rgba(0,0,0,0.15)"><span style="display:inline-block;transform:scaleX(1.0427);transform-origin:0 0">Submitted</span></div>
<svg style="position:absolute;left:729.6px;top:495.6px" width="9" height="11" viewBox="0 0 9 11"><path d="M1.4 1.3 L5.9 5 L1.4 8.7" fill="none" stroke="#fff" stroke-width="2.5"/></svg>
<div style="position:absolute;left:747.5px;top:490.30px;width:71.5px;height:20px;border-radius:3px;background:#8fa1a9"></div>
<div style="position:absolute;left:753.5px;top:494.63px;white-space:nowrap;font:bold 10.6px/10.6px 'Liberation Sans',sans-serif;color:#fff;letter-spacing:0px;text-shadow:0 0 1px rgba(0,0,0,0.15)"><span style="display:inline-block;transform:scaleX(1.0032);transform-origin:0 0">Sublotted</span></div>
<svg style="position:absolute;left:803.1px;top:495.6px" width="9" height="11" viewBox="0 0 9 11"><path d="M1.4 1.3 L5.9 5 L1.4 8.7" fill="none" stroke="#fff" stroke-width="2.5"/></svg>
<div style="position:absolute;left:822.2px;top:490.30px;width:79.7px;height:20px;border-radius:3px;background:#8fa1a9"></div>
<div style="position:absolute;left:828.2px;top:494.63px;white-space:nowrap;font:bold 10.6px/10.6px 'Liberation Sans',sans-serif;color:#fff;letter-spacing:0px;text-shadow:0 0 1px rgba(0,0,0,0.15)"><span style="display:inline-block;transform:scaleX(1.0554);transform-origin:0 0">Manifested</span></div>
<svg style="position:absolute;left:887.2px;top:495.6px" width="9" height="11" viewBox="0 0 9 11"><path d="M1.4 1.3 L5.9 5 L1.4 8.7" fill="none" stroke="#fff" stroke-width="2.5"/></svg>
<div style="position:absolute;left:905.5px;top:490.30px;width:87.2px;height:20px;border-radius:3px;background:#8fa1a9"></div>
<div style="position:absolute;left:911.5px;top:494.63px;white-space:nowrap;font:bold 10.6px/10.6px 'Liberation Sans',sans-serif;color:#fff;letter-spacing:0px;text-shadow:0 0 1px rgba(0,0,0,0.15)"><span style="display:inline-block;transform:scaleX(1.0562);transform-origin:0 0">Quarantined</span></div>
<svg style="position:absolute;left:978.0px;top:495.6px" width="9" height="11" viewBox="0 0 9 11"><path d="M1.4 1.3 L5.9 5 L1.4 8.7" fill="none" stroke="#fff" stroke-width="2.5"/></svg>
<div style="position:absolute;left:669px;top:508.40px;width:64.0px;height:20px;border-radius:3px;background:#8fa1a9"></div>
<div style="position:absolute;left:675px;top:513.63px;white-space:nowrap;font:bold 10.6px/10.6px 'Liberation Sans',sans-serif;color:#fff;letter-spacing:0px;text-shadow:0 0 1px rgba(0,0,0,0.15)"><span style="display:inline-block;transform:scaleX(1.0238);transform-origin:0 0">Invoiced</span></div>
<svg style="position:absolute;left:719.6px;top:514.6px" width="9" height="11" viewBox="0 0 9 11"><path d="M1.4 1.3 L5.9 5 L1.4 8.7" fill="none" stroke="#fff" stroke-width="2.5"/></svg>
<div style="position:absolute;left:1217px;top:504.27px;white-space:nowrap;font:normal 11.5px/11.5px 'Liberation Sans',sans-serif;color:#6e6e6e;letter-spacing:0px;">10/01/2021 10:59 AM</div>
<div style="position:absolute;left:1410.98px;top:503.91px;font:bold 11.8px/11.8px 'Liberation Sans',sans-serif;color:#333;white-space:nowrap">$0.00</div>
<div style="position:absolute;left:1493.1px;top:493.00px;width:84.7px;height:32.9px;box-sizing:border-box;border-radius:4px;background:#00b8b3;border:1px solid #1673b5"></div>
<div style="position:absolute;left:1504.7px;top:503.93px;white-space:nowrap;font:bold 11.3px/11.3px 'Liberation Sans',sans-serif;color:#fff;letter-spacing:0px;"><span style="display:inline-block;transform:scaleX(0.9260);transform-origin:0 0">Cancel Order</span></div>
<div style="position:absolute;left:200px;top:584.72px;width:1384px;height:1.4px;background:#eaecf0"></div>
<div style="position:absolute;left:206px;top:554.52px;width:10px;height:10px;box-sizing:border-box;border:1px solid #777;border-radius:2px;background:#fff"></div>
<div style="position:absolute;left:272.7px;top:552.87px;white-space:nowrap;font:normal 12.7px/12.7px 'Liberation Sans',sans-serif;color:#25aeaa;letter-spacing:0.2px;">ORD - 3762</div>
<svg style="position:absolute;left:353px;top:552.36px" width="13" height="12" viewBox="0 0 13 12"><circle cx="4.4" cy="3.7" r="2.3" fill="none" stroke="#333" stroke-width="1.1"/><circle cx="9" cy="8.2" r="2.3" fill="none" stroke="#333" stroke-width="1.1"/></svg>
<svg style="position:absolute;left:376.5px;top:550.52px" width="23" height="20" viewBox="0 0 23 20"><ellipse cx="11.6" cy="8" rx="10.8" ry="7.6" fill="#ddd7d9"/><path d="M4 12 L2.6 18.6 L10 14.5 Z" fill="#ddd7d9"/></svg>
<div style="position:absolute;left:445.25px;top:540.68px;width:59.75px;height:13.5px;border-radius:2px;background:#ffb800"></div>
<div style="position:absolute;left:451px;top:542.30px;white-space:nowrap;font:bold 9.6px/9.6px 'Liberation Sans',sans-serif;color:#fff;letter-spacing:0px;"><span style="display:inline-block;transform:scaleX(1.0009);transform-origin:0 0">Backorder</span></div>
<div style="position:absolute;left:515.6px;top:552.02px;white-space:nowrap;font:normal 13.7px/13.7px 'Liberation Sans',sans-serif;color:#585858;letter-spacing:0px;"><span style="display:inline-block;transform:scaleX(1.1241);transform-origin:0 0">Animist Cannabis.</span></div>
<div style="position:absolute;left:669px;top:540.72px;width:75.2px;height:20px;border-radius:3px;background:#00b8b3"></div>
<div style="position:absolute;left:675px;top:545.05px;white-space:nowrap;font:bold 10.6px/10.6px 'Liberation Sans',sans-serif;color:#fff;letter-spacing:0px;text-shadow:0 0 1px rgba(0,0,0,0.15)"><span style="display:inline-block;transform:scaleX(1.0427);transform-origin:0 0">Submitted</span></div>
<svg style="position:absolute;left:729.6px;top:546.02px" width="9" height="11" viewBox="0 0 9 11"><path d="M1.4 1.3 L5.9 5 L1.4 8.7" fill="none" stroke="#fff" stroke-width="2.5"/></svg>
<div style="position:absolute;left:747.5px;top:540.72px;width:71.5px;height:20px;border-radius:3px;background:#8fa1a9"></div>
<div style="position:absolute;left:753.5px;top:545.05px;white-space:nowrap;font:bold 10.6px/10.6px 'Liberation Sans',sans-serif;color:#fff;letter-spacing:0px;text-shadow:0 0 1px rgba(0,0,0,0.15)"><span style="display:inline-block;transform:scaleX(1.0032);transform-origin:0 0">Sublotted</span></div>
<svg style="position:absolute;left:803.1px;top:546.02px" width="9" height="11" viewBox="0 0 9 11"><path d="M1.4 1.3 L5.9 5 L1.4 8.7" fill="none" stroke="#fff" stroke-width="2.5"/></svg>
<div style="position:absolute;left:822.2px;top:540.72px;width:79.7px;height:20px;border-radius:3px;background:#8fa1a9"></div>
<div style="position:absolute;left:828.2px;top:545.05px;white-space:nowrap;font:bold 10.6px/10.6px 'Liberation Sans',sans-serif;color:#fff;letter-spacing:0px;text-shadow:0 0 1px rgba(0,0,0,0.15)"><span style="display:inline-block;transform:scaleX(1.0554);transform-origin:0 0">Manifested</span></div>
<svg style="position:absolute;left:887.2px;top:546.02px" width="9" height="11" viewBox="0 0 9 11"><path d="M1.4 1.3 L5.9 5 L1.4 8.7" fill="none" stroke="#fff" stroke-width="2.5"/></svg>
<div style="position:absolute;left:905.5px;top:540.72px;width:87.2px;height:20px;border-radius:3px;background:#8fa1a9"></div>
<div style="position:absolute;left:911.5px;top:545.05px;white-space:nowrap;font:bold 10.6px/10.6px 'Liberation Sans',sans-serif;color:#fff;letter-spacing:0px;text-shadow:0 0 1px rgba(0,0,0,0.15)"><span style="display:inline-block;transform:scaleX(1.0562);transform-origin:0 0">Quarantined</span></div>
<svg style="position:absolute;left:978.0px;top:546.02px" width="9" height="11" viewBox="0 0 9 11"><path d="M1.4 1.3 L5.9 5 L1.4 8.7" fill="none" stroke="#fff" stroke-width="2.5"/></svg>
<div style="position:absolute;left:669px;top:558.82px;width:64.0px;height:20px;border-radius:3px;background:#8fa1a9"></div>
<div style="position:absolute;left:675px;top:564.05px;white-space:nowrap;font:bold 10.6px/10.6px 'Liberation Sans',sans-serif;color:#fff;letter-spacing:0px;text-shadow:0 0 1px rgba(0,0,0,0.15)"><span style="display:inline-block;transform:scaleX(1.0238);transform-origin:0 0">Invoiced</span></div>
<svg style="position:absolute;left:719.6px;top:565.02px" width="9" height="11" viewBox="0 0 9 11"><path d="M1.4 1.3 L5.9 5 L1.4 8.7" fill="none" stroke="#fff" stroke-width="2.5"/></svg>
<div style="position:absolute;left:1217px;top:554.69px;white-space:nowrap;font:normal 11.5px/11.5px 'Liberation Sans',sans-serif;color:#6e6e6e;letter-spacing:0px;">10/10/2021 12:00 AM</div>
<div style="position:absolute;left:1397.86px;top:554.33px;font:bold 11.8px/11.8px 'Liberation Sans',sans-serif;color:#333;white-space:nowrap">$120.00</div>
<div style="position:absolute;left:1493.1px;top:543.42px;width:84.7px;height:32.9px;box-sizing:border-box;border-radius:4px;background:#00b8b3;border:1px solid #1673b5"></div>
<div style="position:absolute;left:1504.7px;top:554.35px;white-space:nowrap;font:bold 11.3px/11.3px 'Liberation Sans',sans-serif;color:#fff;letter-spacing:0px;"><span style="display:inline-block;transform:scaleX(0.9260);transform-origin:0 0">Cancel Order</span></div>
<div style="position:absolute;left:200px;top:635.14px;width:1384px;height:1.4px;background:#eaecf0"></div>
<div style="position:absolute;left:206px;top:604.94px;width:10px;height:10px;box-sizing:border-box;border:1px solid #777;border-radius:2px;background:#fff"></div>
<div style="position:absolute;left:272.7px;top:603.29px;white-space:nowrap;font:normal 12.7px/12.7px 'Liberation Sans',sans-serif;color:#25aeaa;letter-spacing:0.2px;">ORD - 3763</div>
<svg style="position:absolute;left:353px;top:602.78px" width="13" height="12" viewBox="0 0 13 12"><circle cx="4.4" cy="3.7" r="2.3" fill="none" stroke="#333" stroke-width="1.1"/><circle cx="9" cy="8.2" r="2.3" fill="none" stroke="#333" stroke-width="1.1"/></svg>
<svg style="position:absolute;left:376.5px;top:600.94px" width="23" height="20" viewBox="0 0 23 20"><ellipse cx="11.6" cy="8" rx="10.8" ry="7.6" fill="#ddd7d9"/><path d="M4 12 L2.6 18.6 L10 14.5 Z" fill="#ddd7d9"/></svg>
<div style="position:absolute;left:445.25px;top:591.10px;width:59.75px;height:13.5px;border-radius:2px;background:#ffb800"></div>
<div style="position:absolute;left:451px;top:592.72px;white-space:nowrap;font:bold 9.6px/9.6px 'Liberation Sans',sans-serif;color:#fff;letter-spacing:0px;"><span style="display:inline-block;transform:scaleX(1.0009);transform-origin:0 0">Backorder</span></div>
<div style="position:absolute;left:515.6px;top:602.44px;white-space:nowrap;font:normal 13.7px/13.7px 'Liberation Sans',sans-serif;color:#585858;letter-spacing:0px;"><span style="display:inline-block;transform:scaleX(1.1241);transform-origin:0 0">Animist Cannabis.</span></div>
<div style="position:absolute;left:669px;top:591.14px;width:75.2px;height:20px;border-radius:3px;background:#00b8b3"></div>
<div style="position:absolute;left:675px;top:595.47px;white-space:nowrap;font:bold 10.6px/10.6px 'Liberation Sans',sans-serif;color:#fff;letter-spacing:0px;text-shadow:0 0 1px rgba(0,0,0,0.15)"><span style="display:inline-block;transform:scaleX(1.0427);transform-origin:0 0">Submitted</span></div>
<svg style="position:absolute;left:729.6px;top:596.44px" width="9" height="11" viewBox="0 0 9 11"><path d="M1.4 1.3 L5.9 5 L1.4 8.7" fill="none" stroke="#fff" stroke-width="2.5"/></svg>
<div style="position:absolute;left:747.5px;top:591.14px;width:71.5px;height:20px;border-radius:3px;background:#8fa1a9"></div>
<div style="position:absolute;left:753.5px;top:595.47px;white-space:nowrap;font:bold 10.6px/10.6px 'Liberation Sans',sans-serif;color:#fff;letter-spacing:0px;text-shadow:0 0 1px rgba(0,0,0,0.15)"><span style="display:inline-block;transform:scaleX(1.0032);transform-origin:0 0">Sublotted</span></div>
<svg style="position:absolute;left:803.1px;top:596.44px" width="9" height="11" viewBox="0 0 9 11"><path d="M1.4 1.3 L5.9 5 L1.4 8.7" fill="none" stroke="#fff" stroke-width="2.5"/></svg>
<div style="position:absolute;left:822.2px;top:591.14px;width:79.7px;height:20px;border-radius:3px;background:#8fa1a9"></div>
<div style="position:absolute;left:828.2px;top:595.47px;white-space:nowrap;font:bold 10.6px/10.6px 'Liberation Sans',sans-serif;color:#fff;letter-spacing:0px;text-shadow:0 0 1px rgba(0,0,0,0.15)"><span style="display:inline-block;transform:scaleX(1.0554);transform-origin:0 0">Manifested</span></div>
<svg style="position:absolute;left:887.2px;top:596.44px" width="9" height="11" viewBox="0 0 9 11"><path d="M1.4 1.3 L5.9 5 L1.4 8.7" fill="none" stroke="#fff" stroke-width="2.5"/></svg>
<div style="position:absolute;left:905.5px;top:591.14px;width:87.2px;height:20px;border-radius:3px;background:#8fa1a9"></div>
<div style="position:absolute;left:911.5px;top:595.47px;white-space:nowrap;font:bold 10.6px/10.6px 'Liberation Sans',sans-serif;color:#fff;letter-spacing:0px;text-shadow:0 0 1px rgba(0,0,0,0.15)"><span style="display:inline-block;transform:scaleX(1.0562);transform-origin:0 0">Quarantined</span></div>
<svg style="position:absolute;left:978.0px;top:596.44px" width="9" height="11" viewBox="0 0 9 11"><path d="M1.4 1.3 L5.9 5 L1.4 8.7" fill="none" stroke="#fff" stroke-width="2.5"/></svg>
<div style="position:absolute;left:669px;top:609.24px;width:64.0px;height:20px;border-radius:3px;background:#8fa1a9"></div>
<div style="position:absolute;left:675px;top:614.47px;white-space:nowrap;font:bold 10.6px/10.6px 'Liberation Sans',sans-serif;color:#fff;letter-spacing:0px;text-shadow:0 0 1px rgba(0,0,0,0.15)"><span style="display:inline-block;transform:scaleX(1.0238);transform-origin:0 0">Invoiced</span></div>
<svg style="position:absolute;left:719.6px;top:615.44px" width="9" height="11" viewBox="0 0 9 11"><path d="M1.4 1.3 L5.9 5 L1.4 8.7" fill="none" stroke="#fff" stroke-width="2.5"/></svg>
<div style="position:absolute;left:1217px;top:605.11px;white-space:nowrap;font:normal 11.5px/11.5px 'Liberation Sans',sans-serif;color:#6e6e6e;letter-spacing:0px;">6/06/2019 12:00 AM</div>
<div style="position:absolute;left:1397.86px;top:604.75px;font:bold 11.8px/11.8px 'Liberation Sans',sans-serif;color:#333;white-space:nowrap">$168.30</div>
<div style="position:absolute;left:1493.1px;top:593.84px;width:84.7px;height:32.9px;box-sizing:border-box;border-radius:4px;background:#00b8b3;border:1px solid #1673b5"></div>
<div style="position:absolute;left:1504.7px;top:604.77px;white-space:nowrap;font:bold 11.3px/11.3px 'Liberation Sans',sans-serif;color:#fff;letter-spacing:0px;"><span style="display:inline-block;transform:scaleX(0.9260);transform-origin:0 0">Cancel Order</span></div>
<div style="position:absolute;left:200px;top:685.56px;width:1384px;height:1.4px;background:#eaecf0"></div>
<div style="position:absolute;left:206px;top:655.36px;width:10px;height:10px;box-sizing:border-box;border:1px solid #777;border-radius:2px;background:#fff"></div>
<div style="position:absolute;left:272.7px;top:653.71px;white-space:nowrap;font:normal 12.7px/12.7px 'Liberation Sans',sans-serif;color:#25aeaa;letter-spacing:0.2px;">ORD - 3767</div>
<svg style="position:absolute;left:362.9px;top:651.36px" width="23" height="20" viewBox="0 0 23 20"><ellipse cx="11.6" cy="8" rx="10.8" ry="7.6" fill="#ddd7d9"/><path d="M4 12 L2.6 18.6 L10 14.5 Z" fill="#ddd7d9"/></svg>
<div style="position:absolute;left:515.6px;top:652.86px;white-space:nowrap;font:normal 13.7px/13.7px 'Liberation Sans',sans-serif;color:#585858;letter-spacing:0px;"><span style="display:inline-block;transform:scaleX(1.0248);transform-origin:0 0">THE SLOW BURN..</span></div>
<div style="position:absolute;left:669px;top:641.56px;width:75.2px;height:20px;border-radius:3px;background:#00b8b3"></div>
<div style="position:absolute;left:675px;top:645.89px;white-space:nowrap;font:bold 10.6px/10.6px 'Liberation Sans',sans-serif;color:#fff;letter-spacing:0px;text-shadow:0 0 1px rgba(0,0,0,0.15)"><span style="display:inline-block;transform:scaleX(1.0427);transform-origin:0 0">Submitted</span></div>
<svg style="position:absolute;left:729.6px;top:646.86px" width="9" height="11" viewBox="0 0 9 11"><path d="M1.4 1.3 L5.9 5 L1.4 8.7" fill="none" stroke="#fff" stroke-width="2.5"/></svg>
<div style="position:absolute;left:747.5px;top:641.56px;width:71.5px;height:20px;border-radius:3px;background:#00b8b3"></div>
<div style="position:absolute;left:753.5px;top:645.89px;white-space:nowrap;font:bold 10.6px/10.6px 'Liberation Sans',sans-serif;color:#fff;letter-spacing:0px;text-shadow:0 0 1px rgba(0,0,0,0.15)"><span style="display:inline-block;transform:scaleX(1.0032);transform-origin:0 0">Sublotted</span></div>
<svg style="position:absolute;left:803.1px;top:646.86px" width="9" height="11" viewBox="0 0 9 11"><path d="M1.4 1.3 L5.9 5 L1.4 8.7" fill="none" stroke="#fff" stroke-width="2.5"/></svg>
<div style="position:absolute;left:822.2px;top:641.56px;width:79.7px;height:20px;border-radius:3px;background:#8fa1a9"></div>
<div style="position:absolute;left:828.2px;top:645.89px;white-space:nowrap;font:bold 10.6px/10.6px 'Liberation Sans',sans-serif;color:#fff;letter-spacing:0px;text-shadow:0 0 1px rgba(0,0,0,0.15)"><span style="display:inline-block;transform:scaleX(1.0554);transform-origin:0 0">Manifested</span></div>
<svg style="position:absolute;left:887.2px;top:646.86px" width="9" height="11" viewBox="0 0 9 11"><path d="M1.4 1.3 L5.9 5 L1.4 8.7" fill="none" stroke="#fff" stroke-width="2.5"/></svg>
<div style="position:absolute;left:905.5px;top:641.56px;width:87.2px;height:20px;border-radius:3px;background:#8fa1a9"></div>
<div style="position:absolute;left:911.5px;top:645.89px;white-space:nowrap;font:bold 10.6px/10.6px 'Liberation Sans',sans-serif;color:#fff;letter-spacing:0px;text-shadow:0 0 1px rgba(0,0,0,0.15)"><span style="display:inline-block;transform:scaleX(1.0562);transform-origin:0 0">Quarantined</span></div>
<svg style="position:absolute;left:978.0px;top:646.86px" width="9" height="11" viewBox="0 0 9 11"><path d="M1.4 1.3 L5.9 5 L1.4 8.7" fill="none" stroke="#fff" stroke-width="2.5"/></svg>
<div style="position:absolute;left:669px;top:659.66px;width:64.0px;height:20px;border-radius:3px;background:#8fa1a9"></div>
<div style="position:absolute;left:675px;top:664.89px;white-space:nowrap;font:bold 10.6px/10.6px 'Liberation Sans',sans-serif;color:#fff;letter-spacing:0px;text-shadow:0 0 1px rgba(0,0,0,0.15)"><span style="display:inline-block;transform:scaleX(1.0238);transform-origin:0 0">Invoiced</span></div>
<svg style="position:absolute;left:719.6px;top:665.86px" width="9" height="11" viewBox="0 0 9 11"><path d="M1.4 1.3 L5.9 5 L1.4 8.7" fill="none" stroke="#fff" stroke-width="2.5"/></svg>
<div style="position:absolute;left:1217px;top:655.53px;white-space:nowrap;font:normal 11.5px/11.5px 'Liberation Sans',sans-serif;color:#6e6e6e;letter-spacing:0px;">10/15/2021 12:40 PM</div>
<div style="position:absolute;left:1404.42px;top:655.17px;font:bold 11.8px/11.8px 'Liberation Sans',sans-serif;color:#333;white-space:nowrap">$10.00</div>
<div style="position:absolute;left:200px;top:735.98px;width:1384px;height:1.4px;background:#eaecf0"></div>
<div style="position:absolute;left:206px;top:705.78px;width:10px;height:10px;box-sizing:border-box;border:1px solid #777;border-radius:2px;background:#fff"></div>
<div style="position:absolute;left:272.7px;top:704.13px;white-space:nowrap;font:normal 12.7px/12.7px 'Liberation Sans',sans-serif;color:#25aeaa;letter-spacing:0.2px;">ORD - 3768</div>
<svg style="position:absolute;left:362.9px;top:701.78px" width="23" height="20" viewBox="0 0 23 20"><ellipse cx="11.6" cy="8" rx="10.8" ry="7.6" fill="#ddd7d9"/><path d="M4 12 L2.6 18.6 L10 14.5 Z" fill="#ddd7d9"/></svg>
<div style="position:absolute;left:445.25px;top:691.94px;width:59.75px;height:13.5px;border-radius:2px;background:#ffb800"></div>
<div style="position:absolute;left:451px;top:693.56px;white-space:nowrap;font:bold 9.6px/9.6px 'Liberation Sans',sans-serif;color:#fff;letter-spacing:0px;"><span style="display:inline-block;transform:scaleX(1.0009);transform-origin:0 0">Backorder</span></div>
<div style="position:absolute;left:515.6px;top:695.04px;white-space:nowrap;font:normal 13.7px/13.7px 'Liberation Sans',sans-serif;color:#585858;letter-spacing:0px;"><span style="display:inline-block;transform:scaleX(0.9805);transform-origin:0 0">CASCADE HERB</span></div>
<div style="position:absolute;left:515.6px;top:712.94px;white-space:nowrap;font:normal 13.7px/13.7px 'Liberation Sans',sans-serif;color:#585858;letter-spacing:0px;"><span style="display:inline-block;transform:scaleX(1.0651);transform-origin:0 0">COMPANY.</span></div>
<div style="position:absolute;left:669px;top:691.98px;width:75.2px;height:20px;border-radius:3px;background:#00b8b3"></div>
<div style="position:absolute;left:675px;top:696.31px;white-space:nowrap;font:bold 10.6px/10.6px 'Liberation Sans',sans-serif;color:#fff;letter-spacing:0px;text-shadow:0 0 1px rgba(0,0,0,0.15)"><span style="display:inline-block;transform:scaleX(1.0427);transform-origin:0 0">Submitted</span></div>
<svg style="position:absolute;left:729.6px;top:697.28px" width="9" height="11" viewBox="0 0 9 11"><path d="M1.4 1.3 L5.9 5 L1.4 8.7" fill="none" stroke="#fff" stroke-width="2.5"/></svg>
<div style="position:absolute;left:747.5px;top:691.98px;width:71.5px;height:20px;border-radius:3px;background:#8fa1a9"></div>
<div style="position:absolute;left:753.5px;top:696.31px;white-space:nowrap;font:bold 10.6px/10.6px 'Liberation Sans',sans-serif;color:#fff;letter-spacing:0px;text-shadow:0 0 1px rgba(0,0,0,0.15)"><span style="display:inline-block;transform:scaleX(1.0032);transform-origin:0 0">Sublotted</span></div>
<svg style="position:absolute;left:803.1px;top:697.28px" width="9" height="11" viewBox="0 0 9 11"><path d="M1.4 1.3 L5.9 5 L1.4 8.7" fill="none" stroke="#fff" stroke-width="2.5"/></svg>
<div style="position:absolute;left:822.2px;top:691.98px;width:79.7px;height:20px;border-radius:3px;background:#8fa1a9"></div>
<div style="position:absolute;left:828.2px;top:696.31px;white-space:nowrap;font:bold 10.6px/10.6px 'Liberation Sans',sans-serif;color:#fff;letter-spacing:0px;text-shadow:0 0 1px rgba(0,0,0,0.15)"><span style="display:inline-block;transform:scaleX(1.0554);transform-origin:0 0">Manifested</span></div>
<svg style="position:absolute;left:887.2px;top:697.28px" width="9" height="11" viewBox="0 0 9 11"><path d="M1.4 1.3 L5.9 5 L1.4 8.7" fill="none" stroke="#fff" stroke-width="2.5"/></svg>
<div style="position:absolute;left:905.5px;top:691.98px;width:87.2px;height:20px;border-radius:3px;background:#8fa1a9"></div>
<div style="position:absolute;left:911.5px;top:696.31px;white-space:nowrap;font:bold 10.6px/10.6px 'Liberation Sans',sans-serif;color:#fff;letter-spacing:0px;text-shadow:0 0 1px rgba(0,0,0,0.15)"><span style="display:inline-block;transform:scaleX(1.0562);transform-origin:0 0">Quarantined</span></div>
<svg style="position:absolute;left:978.0px;top:697.28px" width="9" height="11" viewBox="0 0 9 11"><path d="M1.4 1.3 L5.9 5 L1.4 8.7" fill="none" stroke="#fff" stroke-width="2.5"/></svg>
<div style="position:absolute;left:669px;top:710.08px;width:64.0px;height:20px;border-radius:3px;background:#8fa1a9"></div>
<div style="position:absolute;left:675px;top:715.31px;white-space:nowrap;font:bold 10.6px/10.6px 'Liberation Sans',sans-serif;color:#fff;letter-spacing:0px;text-shadow:0 0 1px rgba(0,0,0,0.15)"><span style="display:inline-block;transform:scaleX(1.0238);transform-origin:0 0">Invoiced</span></div>
<svg style="position:absolute;left:719.6px;top:716.28px" width="9" height="11" viewBox="0 0 9 11"><path d="M1.4 1.3 L5.9 5 L1.4 8.7" fill="none" stroke="#fff" stroke-width="2.5"/></svg>
<div style="position:absolute;left:1217px;top:705.95px;white-space:nowrap;font:normal 11.5px/11.5px 'Liberation Sans',sans-serif;color:#6e6e6e;letter-spacing:0px;">10/16/2021 9:47 AM</div>
<div style="position:absolute;left:1397.86px;top:705.59px;font:bold 11.8px/11.8px 'Liberation Sans',sans-serif;color:#333;white-space:nowrap">$180.88</div>
<div style="position:absolute;left:1493.1px;top:694.68px;width:84.7px;height:32.9px;box-sizing:border-box;border-radius:4px;background:#00b8b3;border:1px solid #1673b5"></div>
<div style="position:absolute;left:1504.7px;top:705.61px;white-space:nowrap;font:bold 11.3px/11.3px 'Liberation Sans',sans-serif;color:#fff;letter-spacing:0px;"><span style="display:inline-block;transform:scaleX(0.9260);transform-origin:0 0">Cancel Order</span></div>
<div style="position:absolute;left:200px;top:786.40px;width:1384px;height:1.4px;background:#eaecf0"></div>
<div style="position:absolute;left:206px;top:756.20px;width:10px;height:10px;box-sizing:border-box;border:1px solid #777;border-radius:2px;background:#fff"></div>
<div style="position:absolute;left:272.7px;top:754.55px;white-space:nowrap;font:normal 12.7px/12.7px 'Liberation Sans',sans-serif;color:#25aeaa;letter-spacing:0.2px;">ORD - 3770</div>
<svg style="position:absolute;left:362.9px;top:752.20px" width="23" height="20" viewBox="0 0 23 20"><ellipse cx="11.6" cy="8" rx="10.8" ry="7.6" fill="#ddd7d9"/><path d="M4 12 L2.6 18.6 L10 14.5 Z" fill="#ddd7d9"/></svg>
<div style="position:absolute;left:445.25px;top:742.36px;width:59.75px;height:13.5px;border-radius:2px;background:#ffb800"></div>
<div style="position:absolute;left:451px;top:743.98px;white-space:nowrap;font:bold 9.6px/9.6px 'Liberation Sans',sans-serif;color:#fff;letter-spacing:0px;"><span style="display:inline-block;transform:scaleX(1.0009);transform-origin:0 0">Backorder</span></div>
<div style="position:absolute;left:515.6px;top:753.70px;white-space:nowrap;font:normal 13.7px/13.7px 'Liberation Sans',sans-serif;color:#585858;letter-spacing:0px;"><span style="display:inline-block;transform:scaleX(1.0643);transform-origin:0 0">ZZ Pot Retail</span></div>
<div style="position:absolute;left:669px;top:742.40px;width:75.2px;height:20px;border-radius:3px;background:#00b8b3"></div>
<div style="position:absolute;left:675px;top:746.73px;white-space:nowrap;font:bold 10.6px/10.6px 'Liberation Sans',sans-serif;color:#fff;letter-spacing:0px;text-shadow:0 0 1px rgba(0,0,0,0.15)"><span style="display:inline-block;transform:scaleX(1.0427);transform-origin:0 0">Submitted</span></div>
<svg style="position:absolute;left:729.6px;top:747.7px" width="9" height="11" viewBox="0 0 9 11"><path d="M1.4 1.3 L5.9 5 L1.4 8.7" fill="none" stroke="#fff" stroke-width="2.5"/></svg>
<div style="position:absolute;left:747.5px;top:742.40px;width:74.2px;height:20px;border-radius:3px;background:#ffb800"></div>
<div style="position:absolute;left:753.5px;top:746.73px;white-space:nowrap;font:bold 10.6px/10.6px 'Liberation Sans',sans-serif;color:#fff;letter-spacing:0px;text-shadow:0 0 1px rgba(0,0,0,0.15)"><span style="display:inline-block;transform:scaleX(1.0032);transform-origin:0 0">Sublotted</span></div>
<svg style="position:absolute;left:803.0px;top:746.7px" width="12" height="11" viewBox="0 0 12 11"><path d="M6 0.5 L11.6 10.5 H0.4 Z" fill="#fff"/><path d="M6 3.6 V7" stroke="#ffb800" stroke-width="1.5"/><circle cx="6" cy="8.7" r="0.8" fill="#ffb800"/></svg>
<div style="position:absolute;left:825px;top:742.40px;width:79.8px;height:20px;border-radius:3px;background:#8fa1a9"></div>
<div style="position:absolute;left:831px;top:746.73px;white-space:nowrap;font:bold 10.6px/10.6px 'Liberation Sans',sans-serif;color:#fff;letter-spacing:0px;text-shadow:0 0 1px rgba(0,0,0,0.15)"><span style="display:inline-block;transform:scaleX(1.0554);transform-origin:0 0">Manifested</span></div>
<svg style="position:absolute;left:890.0px;top:747.7px" width="9" height="11" viewBox="0 0 9 11"><path d="M1.4 1.3 L5.9 5 L1.4 8.7" fill="none" stroke="#fff" stroke-width="2.5"/></svg>
<div style="position:absolute;left:908.3px;top:742.40px;width:87.8px;height:20px;border-radius:3px;background:#8fa1a9"></div>
<div style="position:absolute;left:914.3px;top:746.73px;white-space:nowrap;font:bold 10.6px/10.6px 'Liberation Sans',sans-serif;color:#fff;letter-spacing:0px;text-shadow:0 0 1px rgba(0,0,0,0.15)"><span style="display:inline-block;transform:scaleX(1.0562);transform-origin:0 0">Quarantined</span></div>
<svg style="position:absolute;left:980.8px;top:747.7px" width="9" height="11" viewBox="0 0 9 11"><path d="M1.4 1.3 L5.9 5 L1.4 8.7" fill="none" stroke="#fff" stroke-width="2.5"/></svg>
<div style="position:absolute;left:669px;top:760.50px;width:64.0px;height:20px;border-radius:3px;background:#8fa1a9"></div>
<div style="position:absolute;left:675px;top:765.73px;white-space:nowrap;font:bold 10.6px/10.6px 'Liberation Sans',sans-serif;color:#fff;letter-spacing:0px;text-shadow:0 0 1px rgba(0,0,0,0.15)"><span style="display:inline-block;transform:scaleX(1.0238);transform-origin:0 0">Invoiced</span></div>
<svg style="position:absolute;left:719.6px;top:766.7px" width="9" height="11" viewBox="0 0 9 11"><path d="M1.4 1.3 L5.9 5 L1.4 8.7" fill="none" stroke="#fff" stroke-width="2.5"/></svg>
<div style="position:absolute;left:1217px;top:756.37px;white-space:nowrap;font:normal 11.5px/11.5px 'Liberation Sans',sans-serif;color:#6e6e6e;letter-spacing:0px;">10/17/2021 9:10 AM</div>
<div style="position:absolute;left:1388.02px;top:756.01px;font:bold 11.8px/11.8px 'Liberation Sans',sans-serif;color:#333;white-space:nowrap">$2,464.30</div>
<div style="position:absolute;left:668px;top:255px;width:74.5px;height:2.2px;background:#e8141b"></div>
<div style="position:absolute;left:1477.3px;top:233.1px;width:107.7px;height:48.9px;box-sizing:border-box;border:2.4px solid #e8141b"></div>
<svg style="position:absolute;left:804px;top:243px" width="10" height="12" viewBox="0 0 10 12"><path d="M2 1.3 L7.8 5.5" stroke="#fff" stroke-width="2.3" fill="none"/><rect x="2.4" y="6" width="4.6" height="3.8" fill="#fff" stroke="#1a1a1a" stroke-width="1.1"/></svg>
<div style="position:absolute;left:0;top:0;width:3px;height:760px;background:#c9d1e2"></div>
<div style="position:absolute;left:3px;top:40px;width:182px;height:720px;background:#fff;border-right:1px solid #e9edf2"></div>
<div style="position:absolute;left:35.5px;top:72.61px;white-space:nowrap;font:normal 11.8px/11.8px 'Liberation Sans',sans-serif;color:#2f7ff5;letter-spacing:0px;">Cannabis Co.</div>
<svg style="position:absolute;left:111px;top:76px" width="8" height="6" viewBox="0 0 8 6"><path d="M1 1.2 L4 4.2 L7 1.2" fill="none" stroke="#888" stroke-width="1.1"/></svg>
<div style="position:absolute;left:5px;top:339px;width:179px;height:45px;box-sizing:border-box;background:#f3f3f3;border:2px solid #e8141b;box-shadow:0 2px 3px rgba(0,0,0,0.08)"></div>
<div style="position:absolute;left:39.5px;top:117.19px;white-space:nowrap;font:normal 11px/11px 'Liberation Sans',sans-serif;color:#4d4d4d;letter-spacing:0.05px;">Dashboard</div>
<div style="position:absolute;left:39.5px;top:157.19px;white-space:nowrap;font:normal 11px/11px 'Liberation Sans',sans-serif;color:#4d4d4d;letter-spacing:0.05px;">Accounts</div>
<div style="position:absolute;left:39.5px;top:197.19px;white-space:nowrap;font:normal 11px/11px 'Liberation Sans',sans-serif;color:#4d4d4d;letter-spacing:0.05px;">Account Groups</div>
<div style="position:absolute;left:39.5px;top:236.89px;white-space:nowrap;font:normal 11px/11px 'Liberation Sans',sans-serif;color:#4d4d4d;letter-spacing:0.05px;">Carts</div>
<div style="position:absolute;left:39.5px;top:276.69px;white-space:nowrap;font:normal 11px/11px 'Liberation Sans',sans-serif;color:#4d4d4d;letter-spacing:0.05px;">Inventory</div>
<div style="position:absolute;left:39.5px;top:316.59px;white-space:nowrap;font:normal 11px/11px 'Liberation Sans',sans-serif;color:#4d4d4d;letter-spacing:0.05px;">Catalogs</div>
<div style="position:absolute;left:45.4px;top:356.79px;white-space:nowrap;font:normal 11px/11px 'Liberation Sans',sans-serif;color:#4d4d4d;letter-spacing:0.05px;">Orders</div>
<div style="position:absolute;left:39.5px;top:396.69px;white-space:nowrap;font:normal 11px/11px 'Liberation Sans',sans-serif;color:#4d4d4d;letter-spacing:0.05px;">Sales Person Report</div>
<div style="position:absolute;left:39.5px;top:436.49px;white-space:nowrap;font:normal 11px/11px 'Liberation Sans',sans-serif;color:#4d4d4d;letter-spacing:0.05px;">Order Summary</div>
<svg style="position:absolute;left:10px;top:110px" width="24" height="24" viewBox="0 0 24 24">
<path d="M11 12 L11 1.5 A10.5 10.5 0 1 0 18.4 19.4 Z" fill="#13aaa4"/><path d="M12.3 10.4 L12.3 0.5 A9.9 9.9 0 0 1 22.2 10.4 Z" fill="#13aaa4"/><path d="M12.6 12.3 L22.4 12.3 A9.8 9.8 0 0 1 19.5 19.2 Z" fill="#13aaa4"/></svg>
<svg style="position:absolute;left:10px;top:150px" width="24" height="21" viewBox="0 0 24 21">
<path d="M7 4 V1.5 Q7 0.3 8.2 0.3 H15.8 Q17 0.3 17 1.5 V4 H15 V2.3 H9 V4 Z" fill="#13aaa4"/>
<rect x="0" y="3.8" width="23.5" height="7.8" rx="1.5" fill="#13aaa4"/><rect x="0" y="12.6" width="23.5" height="7.2" rx="1.5" fill="#13aaa4"/>
<rect x="9" y="10.3" width="5.5" height="3.6" fill="#fff"/><rect x="10" y="11" width="3.5" height="2" fill="#13aaa4"/></svg>
<svg style="position:absolute;left:10px;top:190px" width="25" height="24" viewBox="0 0 25 24">
<circle cx="5.2" cy="3.2" r="3" fill="#13aaa4"/><circle cx="19.8" cy="3.2" r="3" fill="#13aaa4"/>
<path d="M0 10.5 Q0 6.8 3.3 6.8 H6 Q3.5 9 4.5 12.8 Q0.2 13.5 0 10.5Z" fill="#13aaa4"/><path d="M25 10.5 Q25 6.8 21.7 6.8 H19 Q21.5 9 20.5 12.8 Q24.8 13.5 25 10.5Z" fill="#13aaa4"/>
<circle cx="12.5" cy="8" r="4.6" fill="#13aaa4"/><path d="M3.5 21 Q3.5 13.5 9 13.5 H16 Q21.5 13.5 21.5 21 Q21.5 23.5 19 23.5 H6 Q3.5 23.5 3.5 21Z" fill="#13aaa4"/></svg>
<svg style="position:absolute;left:10px;top:233px" width="23" height="20" viewBox="0 0 23 20">
<path d="M0.4 1.3 H4 L6.8 13.6 H19.5" fill="none" stroke="#13aaa4" stroke-width="1.9"/><path d="M5.4 2.5 H22 V11 H7.2 Z" fill="#13aaa4"/>
<circle cx="7" cy="17.4" r="1.9" fill="#13aaa4"/><circle cx="18.2" cy="17.4" r="1.9" fill="#13aaa4"/>
<path d="M13.3 3.2 V9.6 M9.6 6.2 L13.3 9.8 L17 6.2" fill="none" stroke="#fff" stroke-width="1.6"/></svg>
<svg style="position:absolute;left:10px;top:272px" width="24" height="18" viewBox="0 0 24 18"><rect x="0" y="0" width="1.7" height="18" fill="#13aaa4" opacity="0.85"/><rect x="2.7" y="0" width="0.9" height="18" fill="#13aaa4" opacity="0.8"/><rect x="4.6" y="0" width="1.1" height="18" fill="#13aaa4" opacity="0.8"/><rect x="6.6" y="0" width="0.9" height="18" fill="#13aaa4" opacity="0.8"/><rect x="8.6" y="0" width="1.2" height="18" fill="#13aaa4" opacity="0.8"/><rect x="10.8" y="0" width="0.9" height="18" fill="#13aaa4" opacity="0.8"/><rect x="12.8" y="0" width="1.1" height="18" fill="#13aaa4" opacity="0.8"/><rect x="14.9" y="0" width="0.9" height="18" fill="#13aaa4" opacity="0.8"/><rect x="16.9" y="0" width="1.2" height="18" fill="#13aaa4" opacity="0.8"/><rect x="19" y="0" width="0.9" height="18" fill="#13aaa4" opacity="0.8"/><rect x="20.9" y="0" width="2.3" height="18" fill="#13aaa4" opacity="0.85"/></svg>
<svg style="position:absolute;left:10px;top:311.5px" width="22" height="19" viewBox="0 0 22 19">
<rect x="0" y="0" width="10" height="8.6" rx="1.5" fill="#13aaa4"/><rect x="11.8" y="0" width="10" height="8.6" rx="1.5" fill="#13aaa4"/>
<rect x="0" y="10" width="10" height="8.6" rx="1.5" fill="#13aaa4"/><rect x="11.8" y="10" width="10" height="8.6" rx="1.5" fill="#13aaa4"/></svg>
<svg style="position:absolute;left:10px;top:350px" width="31" height="23" viewBox="0 0 31 23">
<defs><linearGradient id="gsw" x1="0" x2="1"><stop offset="0" stop-color="#8cc63e"/><stop offset="1" stop-color="#74bd22"/></linearGradient></defs>
<path d="M0.3 0.6 Q5 4.6 14 5 Q24 5 29.8 6.8 Q26.5 11.5 21 15.6 Q24.5 11.5 26.2 8.6 Q20 7.6 14 7.8 Q4.6 7.4 0.3 0.6Z" fill="url(#gsw)"/>
<circle cx="8" cy="19.8" r="2.2" fill="#84c13a"/><circle cx="17.6" cy="19.8" r="2.2" fill="#84c13a"/></svg>
<svg style="position:absolute;left:10px;top:392px" width="24" height="19" viewBox="0 0 24 19">
<rect x="0" y="0" width="6.6" height="5" rx="1.3" fill="#13aaa4"/><rect x="8.5" y="0" width="15.5" height="5" rx="1.3" fill="#13aaa4"/>
<rect x="0" y="6.7" width="6.6" height="5" rx="1.3" fill="#13aaa4"/><rect x="8.5" y="6.7" width="15.5" height="5" rx="1.3" fill="#13aaa4"/>
<rect x="0" y="13.4" width="6.6" height="5" rx="1.3" fill="#13aaa4"/><rect x="8.5" y="13.4" width="15.5" height="5" rx="1.3" fill="#13aaa4"/></svg>
<svg style="position:absolute;left:10px;top:432.5px" width="24" height="19" viewBox="0 0 24 19">
<circle cx="2.3" cy="2.3" r="2.3" fill="#13aaa4"/><circle cx="2.3" cy="9" r="2.3" fill="#13aaa4"/><circle cx="2.3" cy="15.7" r="2.3" fill="#13aaa4"/>
<rect x="6.3" y="0.5" width="17.3" height="3.6" rx="1" fill="#13aaa4"/><rect x="6.3" y="7.2" width="17.3" height="3.6" rx="1" fill="#13aaa4"/><rect x="6.3" y="13.9" width="17.3" height="3.6" rx="1" fill="#13aaa4"/></svg>
<div id="hdr" style="position:absolute;left:3px;top:0;width:1597px;height:40px;background:#00b8b3;box-shadow:0 1px 1px rgba(0,90,90,0.25)"></div>
<svg style="position:absolute;left:22px;top:5px" width="33" height="33" viewBox="0 0 33 33">
<circle cx="16.4" cy="16" r="14.3" fill="none" stroke="#e3f6f5" stroke-width="1.2"/>
<path d="M9 23.3 Q16.4 30.5 23.8 23.3 Z" fill="none" stroke="#d2efee" stroke-width="1.4"/>
<line x1="16.4" y1="8.3" x2="16.4" y2="23" stroke="#e0f5f4" stroke-width="0.9"/>
<circle cx="16.4" cy="7" r="1.3" fill="none" stroke="#d8f3f2" stroke-width="0.8"/>
<path d="M12.5 13.5 Q14.5 16.5 16.4 17 Q18.3 16.5 20.3 13.5" fill="none" stroke="#cdeeed" stroke-width="1.2"/>
<path d="M10.8 10.5 Q11.5 15 14 18 L14 23" fill="none" stroke="#cdeeed" stroke-width="1"/>
<path d="M22 10.5 Q21.3 15 18.8 18 L18.8 23" fill="none" stroke="#cdeeed" stroke-width="1"/>
<path d="M8.6 16.5 Q11.5 19 12 23" fill="none" stroke="#cdeeed" stroke-width="1"/>
<path d="M24.2 16.5 Q21.3 19 20.8 23" fill="none" stroke="#cdeeed" stroke-width="1"/>
<circle cx="10.6" cy="10" r="1.5" fill="#bfe9e7"/><circle cx="22.2" cy="10" r="1.5" fill="#bfe9e7"/>
<circle cx="8.4" cy="16.2" r="1.6" fill="#bfe9e7"/><circle cx="24.4" cy="16.2" r="1.6" fill="#bfe9e7"/>
</svg>
<div style="position:absolute;left:62.4px;top:1.50px;white-space:nowrap;font:normal 20.2px/20.2px 'Liberation Sans',sans-serif;color:#fff;letter-spacing:0.42px;-webkit-text-stroke:0.6px #fff">cultívera</div>
<div style="position:absolute;left:62.6px;top:15.90px;white-space:nowrap;font:normal 20.2px/20.2px 'Liberation Sans',sans-serif;color:#fff;letter-spacing:0.1px;-webkit-text-stroke:0.6px #fff">pro</div>
<div style="position:absolute;left:184px;top:0;width:108px;height:41px;box-sizing:border-box;border:2px solid #e8141b"></div>
<svg style="position:absolute;left:200px;top:12px" width="22" height="18" viewBox="0 0 22 18">
<path d="M10.6 0.1 L16.2 2.5 L16.2 8.3 L10.6 10.7 L5 8.3 L5 2.5 Z" fill="#fff"/>
<path d="M5.3 7.6 L10.6 9.9 L10.6 15.6 L5.3 17.9 L0 15.6 L0 9.9 Z" fill="#fff"/>
<path d="M15.9 7.6 L21.2 9.9 L21.2 15.6 L15.9 17.9 L10.6 15.6 L10.6 9.9 Z" fill="#fff"/>
<path d="M10.6 1.6 L13.8 2.9 L10.6 4.2 L7.4 2.9 Z" fill="#00b8b3"/>
<path d="M5.3 9.1 L8.5 10.4 L5.3 11.7 L2.1 10.4 Z" fill="#00b8b3"/>
<path d="M15.9 9.1 L19.1 10.4 L15.9 11.7 L12.7 10.4 Z" fill="#00b8b3"/>
<path d="M7 5 L9.2 6 L9.2 8.3 L7 7.3 Z M14.2 5 L12 6 L12 8.3 L14.2 7.3 Z" fill="#00b8b3"/>
<path d="M1.7 12.5 L3.9 13.5 L3.9 15.8 L1.7 14.8 Z M8.9 12.5 L6.7 13.5 L6.7 15.8 L8.9 14.8 Z" fill="#00b8b3"/>
<path d="M12.3 12.5 L14.5 13.5 L14.5 15.8 L12.3 14.8 Z M19.5 12.5 L17.3 13.5 L17.3 15.8 L19.5 14.8 Z" fill="#00b8b3"/>
</svg>
<div style="position:absolute;left:226.6px;top:12.80px;white-space:nowrap;font:normal 16.3px/16.3px 'Liberation Sans',sans-serif;color:#fff;letter-spacing:0px;"><span style="display:inline-block;transform:scaleX(0.9739);transform-origin:0 0">Sales</span></div>
<div style="position:absolute;left:277.5px;top:22px;width:0;height:0;border-left:3px solid transparent;border-right:3px solid transparent;border-top:3.5px solid #fff"></div>
<svg style="position:absolute;left:313px;top:16.5px" width="13" height="10" viewBox="0 0 13 10" fill="#fff">
<rect x="0" y="2" width="10" height="1.6"/><path d="M9.3 0 L12.6 2.8 L9.3 5.6 Z"/>
<rect x="2.8" y="6.3" width="10" height="1.6"/><path d="M3.5 4.3 L0.2 7.1 L3.5 9.9 Z"/></svg>
<svg style="position:absolute;left:355px;top:15px" width="11" height="12" viewBox="0 0 11 12" fill="#fff"><path d="M5.5 0.3 C2.8 0.5 2.2 3 2.2 5 L2.2 7.6 L0.3 9.6 L10.7 9.6 L8.8 7.6 L8.8 5 C8.8 3 8.2 0.5 5.5 0.3Z"/><path d="M4 10.3 A1.6 1.6 0 0 0 7 10.3 Z"/></svg>
<div style="position:absolute;left:369.4px;top:13.1px;width:27.8px;height:14.5px;border-radius:8px;background:#d9736d"></div>
<div style="position:absolute;left:374.95771484374995px;top:15.29px;white-space:nowrap;font:bold 10px/10px 'Liberation Sans',sans-serif;color:#fff;letter-spacing:0px;">472</div>
<svg style="position:absolute;left:427px;top:15px" width="12" height="11" viewBox="0 0 12 11" fill="none" stroke="#fff" stroke-width="1.3"><path d="M1 0.3 V10.6"/><path d="M1.3 1.4 Q3.5 0.2 6 1.6 Q8.5 3 11 1.6 V7 Q8.5 8.4 6 7 Q3.5 5.6 1.3 7"/></svg>
<div style="position:absolute;left:441.6px;top:13.1px;width:17.2px;height:14.5px;border-radius:8px;background:#d9736d"></div>
<div style="position:absolute;left:447.41923828125005px;top:15.29px;white-space:nowrap;font:bold 10px/10px 'Liberation Sans',sans-serif;color:#fff;letter-spacing:0px;">0</div>
<svg style="position:absolute;left:488px;top:15.5px" width="12" height="11" viewBox="0 0 12 11"><path d="M0.2 0.8 H2.2 L3.8 7.4 H10.6" stroke="#fff" stroke-width="1.3" fill="none"/><path d="M3 2.2 H11.2 L10.4 6.2 H3.8 Z" fill="#fff"/><rect x="3.3" y="8.3" width="2" height="2" fill="#fff"/><rect x="8.8" y="8.3" width="2" height="2" fill="#fff"/><path d="M6.5 3 V5 M5.6 4.2 L6.5 5.2 L7.4 4.2" stroke="#00b8b3" stroke-width="0.8" fill="none"/></svg>
<div style="position:absolute;left:502.5px;top:13.1px;width:16.5px;height:14.5px;border-radius:8px;background:#d9736d"></div>
<div style="position:absolute;left:507.96923828125px;top:15.29px;white-space:nowrap;font:bold 10px/10px 'Liberation Sans',sans-serif;color:#fff;letter-spacing:0px;">0</div>
<div style="position:absolute;left:1201.5px;top:5.3px;width:207.5px;height:28.7px;background:#fff;border-radius:2px"></div>
<div style="position:absolute;left:1206px;top:14.69px;white-space:nowrap;font:normal 11px/11px 'Liberation Sans',sans-serif;color:#9a9a9a;letter-spacing:0px;"><span style="display:inline-block;transform:scaleX(1.0142);transform-origin:0 0">Find Order...</span></div>
<svg style="position:absolute;left:1423px;top:4px" width="32" height="32" viewBox="0 0 32 32">
<defs><clipPath id="av"><circle cx="16" cy="16" r="13.6"/></clipPath></defs>
<circle cx="16" cy="16" r="14.3" fill="none" stroke="#fff" stroke-width="1.3"/>
<g clip-path="url(#av)"><path d="M5 31 Q5 23.5 11 22.5 L21 22.5 Q27 23.5 27 31 Z" fill="#d38b06"/><path d="M13.6 17 H18.4 V23 Q16 24.5 13.6 23Z" fill="#f0cdb6"/><ellipse cx="16" cy="13.3" rx="3.9" ry="5" fill="#f7e0d2"/><path d="M12 12 Q11.6 7.5 16 7.6 Q20.4 7.5 20 12 Q19 9.8 16 9.8 Q13 9.8 12 12Z" fill="#8b4a2b"/></g>
</svg>
<div style="position:absolute;left:1457.7px;top:15.68px;white-space:nowrap;font:bold 10.3px/10.3px 'Liberation Sans',sans-serif;color:#fff;letter-spacing:0px;"><span style="display:inline-block;transform:scaleX(0.9396);transform-origin:0 0">Franky Sawyer</span></div>
<div style="position:absolute;left:1530px;top:19.2px;width:0;height:0;border-left:3.5px solid transparent;border-right:3.5px solid transparent;border-top:3.8px solid #fff"></div>
<svg style="position:absolute;left:1566px;top:15px" width="11" height="11" viewBox="0 0 11 11" fill="none" stroke="#fff" stroke-width="2"><path d="M2.9 2.8 A4.1 4.1 0 1 0 8.1 2.8"/><path d="M5.5 0.2 V5"/></svg>
</body></html>
